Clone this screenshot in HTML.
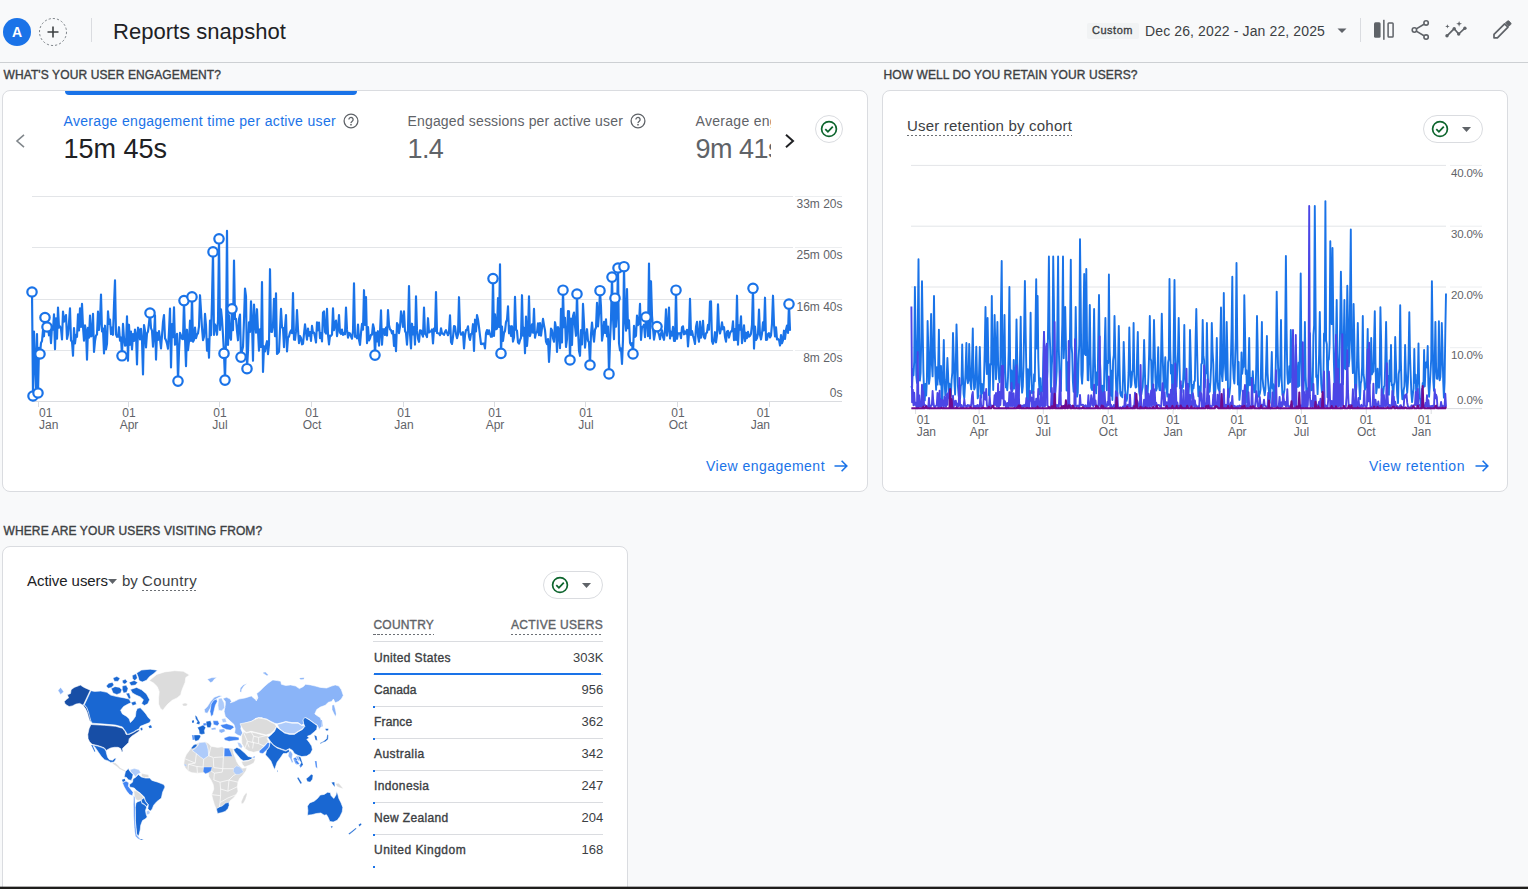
<!DOCTYPE html>
<html lang="en">
<head>
<meta charset="utf-8">
<title>Reports snapshot</title>
<style>
*{box-sizing:border-box;}
html,body{margin:0;padding:0;}
body{width:1528px;height:889px;overflow:hidden;position:relative;background:#f8f9fa;font-family:"Liberation Sans",sans-serif;color:#202124;}
.abs{position:absolute;}
.t{position:absolute;white-space:nowrap;line-height:1;}
#hdr{position:absolute;left:0;top:0;width:1528px;height:63px;background:#f8f9fa;border-bottom:1px solid #cdd0d3;}
.avatar{position:absolute;left:3px;top:18px;width:28px;height:28px;border-radius:50%;background:#1a73e8;color:#fff;font-weight:bold;font-size:14px;line-height:28px;text-align:center;}
.seclabel{position:absolute;font-size:12px;font-weight:bold;letter-spacing:.72px;color:#3c4043;white-space:nowrap;line-height:1;transform-origin:0 0;}
.card{position:absolute;background:#fff;border:1px solid #dadce0;border-radius:8px;}
.axl{position:absolute;font-size:12px;color:#5f6368;white-space:nowrap;line-height:1;}
.link{position:absolute;font-size:14.5px;color:#1a73e8;white-space:nowrap;line-height:1;}
.pill{position:absolute;border:1px solid #dadce0;border-radius:14px;background:#fff;}
.row{position:absolute;left:373px;width:229px;height:32px;border-bottom:1px solid #dadce0;}
.row .c{position:absolute;left:0;top:9px;font-size:12px;font-weight:bold;color:#3c4043;line-height:1;white-space:nowrap;}
.row .v{position:absolute;right:0;top:9px;font-size:12.5px;color:#3c4043;line-height:1;white-space:nowrap;}
.row .b{position:absolute;left:0;bottom:-2px;height:2px;background:#1a73e8;}
</style>
</head>
<body>

<div id="hdr">
<div class="avatar">A</div>
<svg class="abs" style="left:38px;top:17px" width="30" height="30" viewBox="0 0 30 30"><circle cx="15" cy="15" r="13.5" fill="none" stroke="#80868b" stroke-width="1" stroke-dasharray="2.2 2"/><path d="M15 9.5v11M9.5 15h11" stroke="#3c4043" stroke-width="1.6" fill="none"/></svg>
<div class="abs" style="left:91px;top:18px;width:1px;height:24px;background:#dadce0"></div>
<div class="t" style="top:21.08px;font-size:22px;color:#202124;left:113.00px;letter-spacing:0.023px;">Reports snapshot</div>
<div class="abs" style="left:1087px;top:23px;width:52px;height:16px;background:#f1f3f4;border-radius:2px"></div>
<div class="t" style="top:25.29px;font-size:11px;color:#3c4043;left:1092.00px;-webkit-text-stroke:0.33px #3c4043;letter-spacing:0.517px;">Custom</div>
<div class="t" style="top:23.75px;font-size:14px;color:#3c4043;left:1145.00px;letter-spacing:0.123px;">Dec 26, 2022 - Jan 22, 2025</div>
<svg class="abs" style="left:1337px;top:28px" width="10" height="6" viewBox="0 0 10 6"><path d="M0.5 0.5h9L5 5z" fill="#5f6368"/></svg>
<div class="abs" style="left:1360px;top:18px;width:1px;height:24px;background:#dadce0"></div>
<svg class="abs" style="left:1370px;top:16px" width="28" height="28" viewBox="0 0 28 28"><rect x="4" y="6.3" width="6.6" height="15.4" rx="1.5" fill="#5f6368"/><rect x="13.1" y="3.8" width="1.5" height="20" fill="#5f6368"/><rect x="18.1" y="7" width="5" height="14" rx="0.8" fill="none" stroke="#5f6368" stroke-width="1.5"/></svg>
<svg class="abs" style="left:1406px;top:16px" width="28" height="28" viewBox="0 0 28 28"><g fill="none" stroke="#5f6368" stroke-width="1.6"><path d="M10.3 12.9l7.7-4.7M10.3 15.1l7.7 4.7"/><circle cx="20.1" cy="6.9" r="2.2"/><circle cx="8.4" cy="14" r="2.2"/><circle cx="20.1" cy="21.1" r="2.2"/></g></svg>
<svg class="abs" style="left:1442px;top:16px" width="28" height="28" viewBox="0 0 28 28"><path d="M5 19.8l7.2-7.1 4.5 5.3 6.2-5.8" fill="none" stroke="#5f6368" stroke-width="1.7" stroke-linejoin="round"/><g fill="#5f6368"><circle cx="5" cy="19.8" r="1.7"/><circle cx="12.2" cy="12.7" r="1.7"/><circle cx="16.7" cy="18" r="1.7"/><circle cx="22.9" cy="12.2" r="1.7"/><path d="M5.4 8.2l.55 1.65 1.65.55-1.65.55-.55 1.65-.55-1.65-1.65-.55 1.65-.55zM17.1 4.9l.75 2.15 2.15.75-2.15.75-.75 2.15-.75-2.15-2.15-.75 2.15-.75z"/></g></svg>
<svg class="abs" style="left:1488px;top:16px" width="28" height="28" viewBox="0 0 28 28"><path d="M6 21.8v-3.4L16.6 7.8l3.4 3.4L9.4 21.8z" fill="none" stroke="#5f6368" stroke-width="1.7" stroke-linejoin="round"/><path d="M17.4 7l1.9-1.9a1.3 1.3 0 0 1 1.8 0l1.6 1.6a1.3 1.3 0 0 1 0 1.8L20.8 10.4z" fill="#5f6368" stroke="#5f6368" stroke-width="0.8" stroke-linejoin="round"/></svg>
</div>
<div class="t" style="top:68.84px;font-size:12px;color:#3c4043;left:3.50px;-webkit-text-stroke:0.36px #3c4043;letter-spacing:0.109px;">WHAT&#x27;S YOUR USER ENGAGEMENT?</div>
<div class="t" style="top:68.84px;font-size:12px;color:#3c4043;left:883.50px;-webkit-text-stroke:0.36px #3c4043;letter-spacing:0.090px;">HOW WELL DO YOU RETAIN YOUR USERS?</div>
<div class="t" style="top:524.84px;font-size:12px;color:#3c4043;left:3.50px;-webkit-text-stroke:0.36px #3c4043;letter-spacing:0.123px;">WHERE ARE YOUR USERS VISITING FROM?</div>
<div class="card" style="left:2px;top:90px;width:866px;height:402px"></div>
<div class="abs" style="left:65px;top:91px;width:292px;height:4px;background:#1a73e8;border-radius:0 0 4px 4px"></div>
<svg class="abs" style="left:12px;top:131px" width="18" height="20" viewBox="0 0 18 20"><path d="M12 3.8L5 10l7 6.2" fill="none" stroke="#80868b" stroke-width="1.6"/></svg>
<div class="t" style="top:114.35px;font-size:14px;color:#1a73e8;left:63.50px;letter-spacing:0.329px;">Average engagement time per active user</div>
<div class="t" style="top:135.84px;font-size:27px;color:#202124;left:63.50px;letter-spacing:-0.008px;">15m 45s</div>
<div class="t" style="top:114.35px;font-size:14px;color:#5f6368;left:407.50px;letter-spacing:0.168px;">Engaged sessions per active user</div>
<div class="t" style="top:135.84px;font-size:27px;color:#5f6368;left:407.50px;letter-spacing:-0.600px;">1.4</div>
<div class="abs" style="left:695px;top:105px;width:76px;height:62px;overflow:hidden"><div class="t" style="top:9.35px;font-size:14px;color:#5f6368;left:0.50px;letter-spacing:.3px;">Average engagement time per session</div><div class="t" style="top:30.84px;font-size:27px;color:#5f6368;left:0.50px;letter-spacing:-.5px;">9m 41s</div></div>
<svg class="abs" style="left:341.5px;top:111.5px" width="18" height="18" viewBox="0 0 18 18"><circle cx="9" cy="9" r="6.9" fill="none" stroke="#5f6368" stroke-width="1.3"/><path d="M6.9 7.5a2.1 2.1 0 1 1 3.3 1.7c-.8.6-1.2 1-1.2 1.9" fill="none" stroke="#5f6368" stroke-width="1.3"/><circle cx="9" cy="12.7" r=".85" fill="#5f6368"/></svg>
<svg class="abs" style="left:628.5px;top:111.5px" width="18" height="18" viewBox="0 0 18 18"><circle cx="9" cy="9" r="6.9" fill="none" stroke="#5f6368" stroke-width="1.3"/><path d="M6.9 7.5a2.1 2.1 0 1 1 3.3 1.7c-.8.6-1.2 1-1.2 1.9" fill="none" stroke="#5f6368" stroke-width="1.3"/><circle cx="9" cy="12.7" r=".85" fill="#5f6368"/></svg>
<svg class="abs" style="left:780px;top:131px" width="18" height="20" viewBox="0 0 18 20"><path d="M6 3.8L13 10l-7 6.2" fill="none" stroke="#202124" stroke-width="2"/></svg>
<div class="abs" style="left:815px;top:115px;width:28px;height:28px;border:1px solid #dadce0;border-radius:50%;background:#fff"></div>
<svg class="abs" style="left:819px;top:119px" width="20" height="20" viewBox="0 0 20 20"><circle cx="10" cy="10" r="7.4" fill="none" stroke="#0d652d" stroke-width="1.7"/><path d="M6.3 10.2l2.6 2.6 4.9-5.2" fill="none" stroke="#0d652d" stroke-width="1.8"/></svg>
<svg class="abs" style="left:0;top:180px" width="870" height="260" viewBox="0 180 870 260">
<path d="M32 196.5H793" stroke="#e3e5e8" stroke-width="1" fill="none"/>
<path d="M795 196.5H842" stroke="#eceef0" stroke-width="1" fill="none"/>
<path d="M32 247.5H793" stroke="#e3e5e8" stroke-width="1" fill="none"/>
<path d="M795 247.5H842" stroke="#eceef0" stroke-width="1" fill="none"/>
<path d="M32 299.5H793" stroke="#e3e5e8" stroke-width="1" fill="none"/>
<path d="M795 299.5H842" stroke="#eceef0" stroke-width="1" fill="none"/>
<path d="M32 350.5H793" stroke="#e3e5e8" stroke-width="1" fill="none"/>
<path d="M795 350.5H842" stroke="#eceef0" stroke-width="1" fill="none"/>
<path d="M32 401.5H842" stroke="#dadce0" stroke-width="1" fill="none"/>
<path d="M38.5 402v5" stroke="#dadce0" stroke-width="1"/>
<path d="M128.5 402v5" stroke="#dadce0" stroke-width="1"/>
<path d="M219.5 402v5" stroke="#dadce0" stroke-width="1"/>
<path d="M311.5 402v5" stroke="#dadce0" stroke-width="1"/>
<path d="M403.5 402v5" stroke="#dadce0" stroke-width="1"/>
<path d="M494.5 402v5" stroke="#dadce0" stroke-width="1"/>
<path d="M585.5 402v5" stroke="#dadce0" stroke-width="1"/>
<path d="M677.5 402v5" stroke="#dadce0" stroke-width="1"/>
<path d="M769.5 402v5" stroke="#dadce0" stroke-width="1"/>
<polyline points="32,292.0 33,396.0 34,331.6 35,361.0 36,388.0 37,334.1 38,393.0 39,347.8 40,354.0 41,342.9 42,341.0 43,330.0 44,336.3 45,317.5 46,331.0 47,327.0 48,328.3 49,335.3 50,329.7 51,343.2 52,326.5 53,329.7 54,314.3 55,349.3 56,318.3 57,338.7 58,307.6 59,327.6 60,326.4 61,328.6 62,339.4 63,311.5 64,321.6 65,317.9 66,315.0 67,338.9 68,334.6 69,322.4 70,308.4 71,340.7 72,341.3 73,355.8 74,328.1 75,343.4 76,334.9 77,336.9 78,314.3 79,330.5 80,308.3 81,327.0 82,303.9 83,326.9 84,340.6 85,325.4 86,330.7 87,359.6 88,327.9 89,337.7 90,315.6 91,336.4 92,335.7 93,313.8 94,352.0 95,341.1 96,335.4 97,334.4 98,311.5 99,329.9 100,321.1 101,294.5 102,331.5 103,328.6 104,353.4 105,325.7 106,349.4 107,343.8 108,311.3 109,324.0 110,319.6 111,334.1 112,327.7 113,334.8 114,305.0 115,280.3 116,334.3 117,336.8 118,336.7 119,327.2 120,340.6 121,337.5 122,355.8 123,323.8 124,338.1 125,345.6 126,345.3 127,316.3 128,360.8 129,324.7 130,344.8 131,331.5 132,349.4 133,334.0 134,340.9 135,329.5 136,334.5 137,364.5 138,327.6 139,329.8 140,339.4 141,328.9 142,340.0 143,374.4 144,325.0 145,331.0 146,347.5 147,333.4 148,331.4 149,322.8 150,313.0 151,328.2 152,330.7 153,346.7 154,334.1 155,315.2 156,359.6 157,332.7 158,340.0 159,331.1 160,338.9 161,348.5 162,335.7 163,321.9 164,315.0 165,338.3 166,340.3 167,343.6 168,348.7 169,331.1 170,308.5 171,367.5 172,324.1 173,337.1 174,307.4 175,344.8 176,340.2 177,333.8 178,381.1 179,350.9 180,332.8 181,335.3 182,338.8 183,339.2 184,300.6 185,337.6 186,366.2 187,329.7 188,350.2 189,341.4 190,320.7 191,341.0 192,296.9 193,341.7 194,339.8 195,327.5 196,338.2 197,334.7 198,333.4 199,326.3 200,295.2 201,310.6 202,328.0 203,340.1 204,336.6 205,313.8 206,325.5 207,350.6 208,339.3 209,357.8 210,320.5 211,335.2 212,300.2 213,251.9 214,335.0 215,324.4 216,326.2 217,334.8 218,320.0 219,238.8 220,330.0 221,309.4 222,319.0 223,335.3 224,353.4 225,380.1 226,340.0 227,230.8 228,345.0 229,315.4 230,337.0 231,339.8 232,308.8 233,330.2 234,260.5 235,319.0 236,318.9 237,330.9 238,340.3 239,318.9 240,314.6 241,357.1 242,351.0 243,347.0 244,320.3 245,288.6 246,296.4 247,368.7 248,350.9 249,322.3 250,331.9 251,301.4 252,322.9 253,360.8 254,304.5 255,321.5 256,332.6 257,309.2 258,330.9 259,350.8 260,329.3 261,347.0 262,282.1 263,372.0 264,346.2 265,351.5 266,345.2 267,341.2 268,354.1 269,344.4 270,269.2 271,331.6 272,331.9 273,324.7 274,298.9 275,336.1 276,293.4 277,354.0 278,353.0 279,351.8 280,330.1 281,308.8 282,327.3 283,328.0 284,347.2 285,327.1 286,315.0 287,351.4 288,337.5 289,336.6 290,332.5 291,330.4 292,333.2 293,293.0 294,339.6 295,339.8 296,331.4 297,310.1 298,329.6 299,343.2 300,336.0 301,337.9 302,344.4 303,343.9 304,333.8 305,324.4 306,332.7 307,339.6 308,328.5 309,335.7 310,332.0 311,341.0 312,325.8 313,332.8 314,332.5 315,336.8 316,342.5 317,322.4 318,330.3 319,322.5 320,338.1 321,333.0 322,341.4 323,312.7 324,311.3 325,331.9 326,333.5 327,308.8 328,334.3 329,344.4 330,335.7 331,335.8 332,334.5 333,308.3 334,330.2 335,323.7 336,320.5 337,336.2 338,329.3 339,315.0 340,332.6 341,334.0 342,329.6 343,334.9 344,333.2 345,334.3 346,307.6 347,329.9 348,337.7 349,332.9 350,333.4 351,336.6 352,338.7 353,331.2 354,283.3 355,336.8 356,336.2 357,338.3 358,324.5 359,339.8 360,344.8 361,332.8 362,323.9 363,329.7 364,290.2 365,324.9 366,297.0 367,343.2 368,327.1 369,340.4 370,338.5 371,334.8 372,334.7 373,324.3 374,328.5 375,355.1 376,332.6 377,341.5 378,331.2 379,345.7 380,332.1 381,310.4 382,344.8 383,329.4 384,329.2 385,335.0 386,327.6 387,335.5 388,310.0 389,325.1 390,329.4 391,330.2 392,333.4 393,331.0 394,346.0 395,334.9 396,351.2 397,323.0 398,325.0 399,333.1 400,326.8 401,311.3 402,317.9 403,326.8 404,311.3 405,331.0 406,333.1 407,344.7 408,329.0 409,286.0 410,334.1 411,348.5 412,323.7 413,334.5 414,327.1 415,344.6 416,296.4 417,330.9 418,338.7 419,341.8 420,330.4 421,330.6 422,334.1 423,336.7 424,307.6 425,333.7 426,334.7 427,337.1 428,318.2 429,332.5 430,331.6 431,331.3 432,329.5 433,343.4 434,328.6 435,331.1 436,292.0 437,332.9 438,333.2 439,333.5 440,335.2 441,328.3 442,333.5 443,333.8 444,334.9 445,331.8 446,330.1 447,332.9 448,335.2 449,331.9 450,315.4 451,342.0 452,344.0 453,336.8 454,326.1 455,326.5 456,333.9 457,338.1 458,334.5 459,297.2 460,331.1 461,334.7 462,334.2 463,332.1 464,348.4 465,335.3 466,330.0 467,329.9 468,326.3 469,336.4 470,340.0 471,334.0 472,333.8 473,324.2 474,350.9 475,319.7 476,331.5 477,315.0 478,319.5 479,327.0 480,335.6 481,344.0 482,344.1 483,343.5 484,343.5 485,348.4 486,333.1 487,330.0 488,334.1 489,330.4 490,334.0 491,336.8 492,336.7 493,278.6 494,335.9 495,314.3 496,329.3 497,328.7 498,298.2 499,327.0 500,264.3 501,353.4 502,326.5 503,340.9 504,332.9 505,331.1 506,321.9 507,319.8 508,306.3 509,333.3 510,326.4 511,336.0 512,326.2 513,341.6 514,337.4 515,296.9 516,329.6 517,330.8 518,342.3 519,343.6 520,340.1 521,337.8 522,295.2 523,335.7 524,327.9 525,353.3 526,316.6 527,346.0 528,333.2 529,296.4 530,336.1 531,331.8 532,324.4 533,332.6 534,308.9 535,337.7 536,332.9 537,332.3 538,323.4 539,335.1 540,323.1 541,335.7 542,327.9 543,318.8 544,325.1 545,330.2 546,341.7 547,344.1 548,339.0 549,362.0 550,345.1 551,328.6 552,330.3 553,338.1 554,341.8 555,322.2 556,328.0 557,352.0 558,327.0 559,330.1 560,348.1 561,308.8 562,342.5 563,290.2 564,327.3 565,317.9 566,347.0 567,339.1 568,311.0 569,311.2 570,360.0 571,318.6 572,345.0 573,316.0 574,312.6 575,326.1 576,335.8 577,294.0 578,329.3 579,350.7 580,355.8 581,330.0 582,344.5 583,303.9 584,322.8 585,347.6 586,336.2 587,329.2 588,340.7 589,342.5 590,365.0 591,333.8 592,322.5 593,333.4 594,341.7 595,329.8 596,327.5 597,302.8 598,326.5 599,314.0 600,290.7 601,307.0 602,340.6 603,334.2 604,321.9 605,332.9 606,319.4 607,336.4 608,326.6 609,373.9 610,342.3 611,319.0 612,277.1 613,317.7 614,339.3 615,298.2 616,326.6 617,312.0 618,268.0 619,343.1 620,350.3 621,348.4 622,363.9 623,339.7 624,266.7 625,319.4 626,330.7 627,289.0 628,328.3 629,320.4 630,342.8 631,345.1 632,343.1 633,353.9 634,325.8 635,336.9 636,335.7 637,315.5 638,325.1 639,323.3 640,303.9 641,339.9 642,327.1 643,326.7 644,324.6 645,337.2 646,317.0 647,316.7 648,336.1 649,263.5 650,338.4 651,281.2 652,315.5 653,328.4 654,339.6 655,333.5 656,328.4 657,326.6 658,331.7 659,334.6 660,339.2 661,333.5 662,330.2 663,336.8 664,339.8 665,330.3 666,309.4 667,335.6 668,328.5 669,307.6 670,338.5 671,331.7 672,335.7 673,326.8 674,341.0 675,341.0 676,290.2 677,338.8 678,333.2 679,333.4 680,333.2 681,338.1 682,327.3 683,326.3 684,334.3 685,331.4 686,333.7 687,329.8 688,346.5 689,333.1 690,298.9 691,335.0 692,331.0 693,335.8 694,339.2 695,344.0 696,326.8 697,321.9 698,336.0 699,341.7 700,321.5 701,337.7 702,333.3 703,320.8 704,337.3 705,338.5 706,333.4 707,332.5 708,324.8 709,329.6 710,301.5 711,301.4 712,341.1 713,343.8 714,340.1 715,332.2 716,342.3 717,335.0 718,304.4 719,328.6 720,333.5 721,328.9 722,322.4 723,329.3 724,327.2 725,337.0 726,341.6 727,331.6 728,330.9 729,337.6 730,333.4 731,331.3 732,331.2 733,321.4 734,340.2 735,329.1 736,340.0 737,295.7 738,344.7 739,325.4 740,329.7 741,316.3 742,343.1 743,335.4 744,325.4 745,341.2 746,332.7 747,338.1 748,331.8 749,336.6 750,335.9 751,333.7 752,324.5 753,288.3 754,348.6 755,326.6 756,339.9 757,338.2 758,333.6 759,309.6 760,335.0 761,339.4 762,333.5 763,322.4 764,330.3 765,297.7 766,339.9 767,339.7 768,334.0 769,333.1 770,337.5 771,335.5 772,323.6 773,295.7 774,324.6 775,336.4 776,327.4 777,339.5 778,338.9 779,339.9 780,345.5 781,335.0 782,343.3 783,340.1 784,330.7 785,338.9 786,329.8 787,325.5 788,332.9 789,304.1 790,330.0" fill="none" stroke="#1a73e8" stroke-width="2.15" stroke-linejoin="round" stroke-linecap="round"/>
<circle cx="32.0" cy="292.0" r="4.7" fill="#fff" stroke="#1a73e8" stroke-width="2.2"/>
<circle cx="33.0" cy="396.0" r="4.7" fill="#fff" stroke="#1a73e8" stroke-width="2.2"/>
<circle cx="38.0" cy="393.0" r="4.7" fill="#fff" stroke="#1a73e8" stroke-width="2.2"/>
<circle cx="40.0" cy="354.0" r="4.7" fill="#fff" stroke="#1a73e8" stroke-width="2.2"/>
<circle cx="45.0" cy="317.5" r="4.7" fill="#fff" stroke="#1a73e8" stroke-width="2.2"/>
<circle cx="47.0" cy="327.0" r="4.7" fill="#fff" stroke="#1a73e8" stroke-width="2.2"/>
<circle cx="122.0" cy="355.8" r="4.7" fill="#fff" stroke="#1a73e8" stroke-width="2.2"/>
<circle cx="150.0" cy="313.0" r="4.7" fill="#fff" stroke="#1a73e8" stroke-width="2.2"/>
<circle cx="178.0" cy="381.1" r="4.7" fill="#fff" stroke="#1a73e8" stroke-width="2.2"/>
<circle cx="184.0" cy="300.6" r="4.7" fill="#fff" stroke="#1a73e8" stroke-width="2.2"/>
<circle cx="192.0" cy="296.9" r="4.7" fill="#fff" stroke="#1a73e8" stroke-width="2.2"/>
<circle cx="213.0" cy="251.9" r="4.7" fill="#fff" stroke="#1a73e8" stroke-width="2.2"/>
<circle cx="219.0" cy="238.8" r="4.7" fill="#fff" stroke="#1a73e8" stroke-width="2.2"/>
<circle cx="224.0" cy="353.4" r="4.7" fill="#fff" stroke="#1a73e8" stroke-width="2.2"/>
<circle cx="225.0" cy="380.1" r="4.7" fill="#fff" stroke="#1a73e8" stroke-width="2.2"/>
<circle cx="232.0" cy="308.8" r="4.7" fill="#fff" stroke="#1a73e8" stroke-width="2.2"/>
<circle cx="241.0" cy="357.1" r="4.7" fill="#fff" stroke="#1a73e8" stroke-width="2.2"/>
<circle cx="247.0" cy="368.7" r="4.7" fill="#fff" stroke="#1a73e8" stroke-width="2.2"/>
<circle cx="375.0" cy="355.1" r="4.7" fill="#fff" stroke="#1a73e8" stroke-width="2.2"/>
<circle cx="493.0" cy="278.6" r="4.7" fill="#fff" stroke="#1a73e8" stroke-width="2.2"/>
<circle cx="501.0" cy="353.4" r="4.7" fill="#fff" stroke="#1a73e8" stroke-width="2.2"/>
<circle cx="563.0" cy="290.2" r="4.7" fill="#fff" stroke="#1a73e8" stroke-width="2.2"/>
<circle cx="570.0" cy="360.0" r="4.7" fill="#fff" stroke="#1a73e8" stroke-width="2.2"/>
<circle cx="577.0" cy="294.0" r="4.7" fill="#fff" stroke="#1a73e8" stroke-width="2.2"/>
<circle cx="590.0" cy="365.0" r="4.7" fill="#fff" stroke="#1a73e8" stroke-width="2.2"/>
<circle cx="600.0" cy="290.7" r="4.7" fill="#fff" stroke="#1a73e8" stroke-width="2.2"/>
<circle cx="609.0" cy="373.9" r="4.7" fill="#fff" stroke="#1a73e8" stroke-width="2.2"/>
<circle cx="612.0" cy="277.1" r="4.7" fill="#fff" stroke="#1a73e8" stroke-width="2.2"/>
<circle cx="615.0" cy="298.2" r="4.7" fill="#fff" stroke="#1a73e8" stroke-width="2.2"/>
<circle cx="618.0" cy="268.0" r="4.7" fill="#fff" stroke="#1a73e8" stroke-width="2.2"/>
<circle cx="624.0" cy="266.7" r="4.7" fill="#fff" stroke="#1a73e8" stroke-width="2.2"/>
<circle cx="633.0" cy="353.9" r="4.7" fill="#fff" stroke="#1a73e8" stroke-width="2.2"/>
<circle cx="646.0" cy="317.0" r="4.7" fill="#fff" stroke="#1a73e8" stroke-width="2.2"/>
<circle cx="657.0" cy="326.6" r="4.7" fill="#fff" stroke="#1a73e8" stroke-width="2.2"/>
<circle cx="676.0" cy="290.2" r="4.7" fill="#fff" stroke="#1a73e8" stroke-width="2.2"/>
<circle cx="753.0" cy="288.3" r="4.7" fill="#fff" stroke="#1a73e8" stroke-width="2.2"/>
<circle cx="789.0" cy="304.1" r="4.7" fill="#fff" stroke="#1a73e8" stroke-width="2.2"/>
</svg>
<div class="t" style="top:197.64px;font-size:12px;color:#5f6368;right:685.50px;">33m 20s</div>
<div class="t" style="top:248.84px;font-size:12px;color:#5f6368;right:685.50px;">25m 00s</div>
<div class="t" style="top:301.34px;font-size:12px;color:#5f6368;right:685.50px;">16m 40s</div>
<div class="t" style="top:351.84px;font-size:12px;color:#5f6368;right:685.50px;">8m 20s</div>
<div class="t" style="top:386.84px;font-size:12px;color:#5f6368;right:685.50px;">0s</div>
<div class="t" style="top:406.84px;font-size:12px;color:#5f6368;left:39.00px;">01</div>
<div class="t" style="top:418.64px;font-size:12px;color:#5f6368;left:39.00px;">Jan</div>
<div class="t" style="top:406.84px;font-size:12px;color:#5f6368;left:122.33px;">01</div>
<div class="t" style="top:418.64px;font-size:12px;color:#5f6368;left:119.66px;">Apr</div>
<div class="t" style="top:406.84px;font-size:12px;color:#5f6368;left:213.33px;">01</div>
<div class="t" style="top:418.64px;font-size:12px;color:#5f6368;left:212.33px;">Jul</div>
<div class="t" style="top:406.84px;font-size:12px;color:#5f6368;left:305.33px;">01</div>
<div class="t" style="top:418.64px;font-size:12px;color:#5f6368;left:302.67px;">Oct</div>
<div class="t" style="top:406.84px;font-size:12px;color:#5f6368;left:397.33px;">01</div>
<div class="t" style="top:418.64px;font-size:12px;color:#5f6368;left:394.33px;">Jan</div>
<div class="t" style="top:406.84px;font-size:12px;color:#5f6368;left:488.33px;">01</div>
<div class="t" style="top:418.64px;font-size:12px;color:#5f6368;left:485.66px;">Apr</div>
<div class="t" style="top:406.84px;font-size:12px;color:#5f6368;left:579.33px;">01</div>
<div class="t" style="top:418.64px;font-size:12px;color:#5f6368;left:578.33px;">Jul</div>
<div class="t" style="top:406.84px;font-size:12px;color:#5f6368;left:671.33px;">01</div>
<div class="t" style="top:418.64px;font-size:12px;color:#5f6368;left:668.67px;">Oct</div>
<div class="t" style="top:406.84px;font-size:12px;color:#5f6368;left:756.65px;">01</div>
<div class="t" style="top:418.64px;font-size:12px;color:#5f6368;left:750.65px;">Jan</div>
<div class="t" style="top:459.15px;font-size:14px;color:#1a73e8;left:0.00px;letter-spacing:0.479px;left:706px;">View engagement</div>
<svg class="abs" style="left:833px;top:459px" width="16" height="14" viewBox="0 0 16 14"><path d="M1.5 7h12M8.6 1.8L13.8 7l-5.2 5.2" fill="none" stroke="#1a73e8" stroke-width="1.6"/></svg>
<div class="card" style="left:882px;top:90px;width:626px;height:402px"></div>
<div class="t" style="top:117.80px;font-size:15px;color:#3c4043;left:907.00px;letter-spacing:0.205px;">User retention by cohort</div>
<div class="abs" style="left:907px;top:135px;width:165px;height:1px;background:repeating-linear-gradient(90deg,#6b6f74 0 2.5px,transparent 2.5px 4px)"></div>
<div class="pill" style="left:1423px;top:115px;width:60px;height:28px"></div>
<svg class="abs" style="left:1430px;top:119px" width="20" height="20" viewBox="0 0 20 20"><circle cx="10" cy="10" r="7.4" fill="none" stroke="#0d652d" stroke-width="1.7"/><path d="M6.3 10.2l2.6 2.6 4.9-5.2" fill="none" stroke="#0d652d" stroke-width="1.8"/></svg>
<svg class="abs" style="left:1462px;top:126.5px" width="9" height="5" viewBox="0 0 9 5"><path d="M0 0h9L4.5 5z" fill="#5f6368"/></svg>
<svg class="abs" style="left:890px;top:150px" width="620" height="270" viewBox="890 150 620 270">
<path d="M911 165.4H1446" stroke="#e3e5e8" stroke-width="1" fill="none"/>
<path d="M1450 165.4H1482" stroke="#eceef0" stroke-width="1" fill="none"/>
<path d="M911 226.2H1446" stroke="#e3e5e8" stroke-width="1" fill="none"/>
<path d="M1450 226.2H1482" stroke="#eceef0" stroke-width="1" fill="none"/>
<path d="M911 287.0H1446" stroke="#e3e5e8" stroke-width="1" fill="none"/>
<path d="M1450 287.0H1482" stroke="#eceef0" stroke-width="1" fill="none"/>
<path d="M911 347.7H1446" stroke="#e3e5e8" stroke-width="1" fill="none"/>
<path d="M1450 347.7H1482" stroke="#eceef0" stroke-width="1" fill="none"/>
<path d="M911 408.6H1482" stroke="#dadce0" stroke-width="1" fill="none"/>
<path d="M915.6 409v5" stroke="#dadce0" stroke-width="1"/>
<path d="M979.1 409v5" stroke="#dadce0" stroke-width="1"/>
<path d="M1043.3 409v5" stroke="#dadce0" stroke-width="1"/>
<path d="M1108.2 409v5" stroke="#dadce0" stroke-width="1"/>
<path d="M1173.1 409v5" stroke="#dadce0" stroke-width="1"/>
<path d="M1237.2 409v5" stroke="#dadce0" stroke-width="1"/>
<path d="M1301.4 409v5" stroke="#dadce0" stroke-width="1"/>
<path d="M1366.3 409v5" stroke="#dadce0" stroke-width="1"/>
<path d="M1431.2 409v5" stroke="#dadce0" stroke-width="1"/>
<polyline points="911.4,385.9 912.1,388.4 912.8,369.0 913.5,375.3 914.2,361.7 914.9,287.0 915.6,334.5 916.3,375.6 917.0,382.8 917.7,335.8 918.5,259.3 919.2,348.1 919.9,380.6 920.6,372.8 921.3,336.3 922.0,281.3 922.7,329.0 923.4,371.6 924.1,393.7 924.8,400.4 925.5,384.0 926.2,395.5 926.9,379.9 927.6,321.0 928.3,347.5 929.0,383.9 929.7,378.0 930.4,348.1 931.1,314.0 931.9,364.5 932.6,376.4 933.3,345.4 934.0,296.0 934.7,349.0 935.4,373.8 936.1,389.8 936.8,367.3 937.5,384.6 938.2,366.8 938.9,329.6 939.6,377.7 940.3,384.6 941.0,366.0 941.7,400.1 942.4,399.3 943.1,369.8 943.8,340.0 944.5,379.4 945.3,395.5 946.0,391.9 946.7,376.8 947.4,358.0 948.1,374.2 948.8,397.9 949.5,383.7 950.2,398.9 950.9,395.3 951.6,380.0 952.3,372.6 953.0,333.0 953.7,356.2 954.4,382.0 955.1,394.6 955.8,364.7 956.5,324.5 957.2,350.0 957.9,385.9 958.7,396.1 959.4,389.5 960.1,398.4 960.8,386.3 961.5,383.6 962.2,344.4 962.9,375.6 963.6,394.2 964.3,398.3 965.0,384.9 965.7,366.9 966.4,343.0 967.1,377.9 967.8,383.2 968.5,380.8 969.2,344.0 969.9,367.7 970.6,384.2 971.3,389.3 972.1,358.1 972.8,328.4 973.5,377.4 974.2,389.5 974.9,387.6 975.6,370.1 976.3,346.8 977.0,376.0 977.7,398.4 978.4,395.0 979.1,372.1 979.8,347.0 980.5,379.0 981.2,397.6 981.9,383.9 982.6,385.9 983.3,393.5 984.0,379.0 984.7,350.8 985.5,307.0 986.2,357.9 986.9,374.0 987.6,318.0 988.3,356.1 989.0,395.2 989.7,395.3 990.4,364.0 991.1,364.5 991.8,296.0 992.5,353.5 993.2,390.1 993.9,360.0 994.6,315.0 995.3,343.4 996.0,379.2 996.7,352.9 997.4,322.0 998.1,361.0 998.9,378.1 999.6,382.4 1000.3,371.0 1001.0,305.8 1001.7,261.0 1002.4,360.7 1003.1,385.2 1003.8,354.7 1004.5,315.0 1005.2,370.3 1005.9,387.4 1006.6,385.6 1007.3,390.3 1008.0,377.1 1008.7,350.4 1009.4,287.0 1010.1,358.7 1010.8,388.8 1011.5,370.5 1012.3,391.1 1013.0,387.6 1013.7,360.0 1014.4,388.5 1015.1,384.9 1015.8,367.8 1016.5,319.5 1017.2,356.8 1017.9,388.0 1018.6,396.0 1019.3,385.5 1020.0,359.5 1020.7,316.7 1021.4,375.4 1022.1,392.7 1022.8,386.7 1023.5,366.2 1024.2,325.7 1024.9,281.0 1025.7,335.3 1026.4,374.1 1027.1,401.7 1027.8,369.1 1028.5,399.9 1029.2,382.9 1029.9,365.9 1030.6,312.8 1031.3,369.7 1032.0,393.3 1032.7,388.8 1033.4,392.9 1034.1,374.3 1034.8,381.2 1035.5,326.1 1036.2,279.2 1036.9,348.5 1037.6,296.0 1038.3,359.0 1039.1,384.1 1039.8,394.4 1040.5,378.3 1041.2,399.8 1041.9,387.3 1042.6,391.3 1043.3,358.8 1044.0,332.0 1044.7,355.9 1045.4,394.5 1046.1,395.0 1046.8,383.6 1047.5,371.1 1048.2,317.1 1048.9,256.4 1049.6,332.0 1050.3,350.9 1051.0,391.9 1051.8,365.8 1052.5,353.4 1053.2,256.4 1053.9,302.4 1054.6,368.3 1055.3,392.2 1056.0,383.7 1056.7,371.0 1057.4,320.9 1058.1,256.4 1058.8,348.6 1059.5,373.0 1060.2,390.8 1060.9,391.0 1061.6,352.3 1062.3,324.0 1063.0,256.4 1063.7,358.3 1064.4,341.0 1065.2,307.0 1065.9,341.3 1066.6,390.5 1067.3,362.2 1068.0,388.7 1068.7,394.2 1069.4,370.7 1070.1,326.1 1070.8,259.8 1071.5,345.8 1072.2,353.3 1072.9,381.8 1073.6,391.8 1074.3,389.7 1075.0,357.9 1075.7,307.0 1076.4,350.0 1077.1,396.7 1077.8,392.3 1078.6,358.9 1079.3,344.5 1080.0,239.1 1080.7,298.2 1081.4,374.7 1082.1,383.6 1082.8,370.5 1083.5,317.1 1084.2,274.0 1084.9,353.9 1085.6,355.1 1086.3,269.0 1087.0,340.2 1087.7,380.2 1088.4,380.4 1089.1,349.0 1089.8,305.0 1090.5,357.1 1091.2,387.6 1092.0,390.0 1092.7,389.8 1093.4,351.7 1094.1,309.0 1094.8,357.1 1095.5,385.3 1096.2,393.3 1096.9,372.2 1097.6,384.9 1098.3,338.2 1099.0,295.0 1099.7,356.0 1100.4,370.0 1101.1,394.8 1101.8,389.8 1102.5,385.6 1103.2,393.2 1103.9,394.7 1104.6,350.7 1105.4,318.0 1106.1,365.0 1106.8,390.2 1107.5,360.8 1108.2,363.2 1108.9,274.5 1109.6,348.1 1110.3,365.8 1111.0,395.7 1111.7,370.8 1112.4,400.1 1113.1,360.4 1113.8,355.2 1114.5,316.0 1115.2,347.6 1115.9,379.1 1116.6,400.4 1117.3,394.8 1118.0,370.1 1118.8,326.0 1119.5,364.3 1120.2,392.8 1120.9,395.9 1121.6,392.3 1122.3,397.4 1123.0,379.3 1123.7,342.0 1124.4,365.9 1125.1,390.2 1125.8,397.4 1126.5,400.9 1127.2,398.1 1127.9,389.0 1128.6,372.4 1129.3,327.5 1130.0,359.2 1130.7,387.2 1131.4,384.9 1132.2,372.0 1132.9,370.4 1133.6,323.0 1134.3,374.3 1135.0,383.1 1135.7,387.6 1136.4,386.9 1137.1,355.4 1137.8,332.0 1138.5,372.5 1139.2,391.8 1139.9,395.7 1140.6,392.0 1141.3,394.6 1142.0,390.1 1142.7,387.0 1143.4,370.9 1144.1,340.0 1144.8,365.7 1145.6,399.4 1146.3,401.0 1147.0,405.8 1147.7,392.0 1148.4,377.2 1149.1,354.2 1149.8,316.0 1150.5,358.6 1151.2,360.6 1151.9,393.6 1152.6,384.4 1153.3,357.0 1154.0,320.0 1154.7,348.4 1155.4,377.5 1156.1,390.6 1156.8,388.7 1157.5,370.4 1158.2,347.2 1159.0,386.5 1159.7,390.2 1160.4,390.4 1161.1,353.2 1161.8,313.7 1162.5,350.9 1163.2,372.8 1163.9,390.9 1164.6,373.8 1165.3,357.1 1166.0,387.5 1166.7,390.9 1167.4,396.6 1168.1,362.4 1168.8,359.0 1169.5,279.0 1170.2,347.5 1170.9,373.5 1171.6,364.9 1172.4,396.8 1173.1,394.2 1173.8,332.2 1174.5,280.0 1175.2,345.1 1175.9,384.2 1176.6,386.6 1177.3,367.6 1178.0,352.8 1178.7,318.0 1179.4,358.5 1180.1,388.2 1180.8,385.3 1181.5,392.7 1182.2,385.8 1182.9,387.2 1183.6,368.7 1184.3,325.0 1185.0,378.3 1185.8,384.2 1186.5,401.3 1187.2,383.7 1187.9,383.9 1188.6,393.4 1189.3,382.2 1190.0,330.0 1190.7,357.1 1191.4,387.3 1192.1,398.2 1192.8,385.0 1193.5,388.3 1194.2,381.3 1194.9,380.9 1195.6,339.2 1196.3,309.0 1197.0,344.6 1197.7,376.5 1198.4,396.2 1199.2,386.5 1199.9,400.7 1200.6,397.4 1201.3,364.1 1202.0,363.4 1202.7,320.0 1203.4,356.2 1204.1,360.4 1204.8,387.4 1205.5,371.4 1206.2,373.4 1206.9,323.0 1207.6,361.7 1208.3,394.6 1209.0,384.2 1209.7,391.8 1210.4,381.9 1211.1,366.7 1211.8,323.0 1212.6,351.5 1213.3,364.2 1214.0,398.5 1214.7,400.9 1215.4,389.8 1216.1,369.6 1216.8,338.0 1217.5,380.2 1218.2,388.1 1218.9,390.1 1219.6,391.3 1220.3,343.4 1221.0,307.4 1221.7,373.3 1222.4,381.1 1223.1,366.6 1223.8,293.0 1224.5,349.6 1225.2,368.1 1226.0,380.1 1226.7,322.0 1227.4,353.0 1228.1,396.3 1228.8,397.5 1229.5,393.5 1230.2,385.8 1230.9,358.7 1231.6,328.6 1232.3,276.8 1233.0,364.6 1233.7,378.9 1234.4,383.5 1235.1,360.5 1235.8,338.6 1236.5,263.0 1237.2,335.3 1237.9,384.5 1238.6,362.0 1239.4,399.9 1240.1,392.4 1240.8,389.8 1241.5,352.5 1242.2,373.8 1242.9,367.2 1243.6,367.0 1244.3,295.3 1245.0,330.8 1245.7,374.1 1246.4,370.3 1247.1,402.7 1247.8,392.5 1248.5,367.9 1249.2,338.0 1249.9,385.2 1250.6,377.9 1251.3,377.9 1252.0,387.8 1252.8,371.2 1253.5,384.8 1254.2,392.4 1254.9,385.1 1255.6,392.0 1256.3,364.3 1257.0,316.0 1257.7,347.3 1258.4,396.7 1259.1,396.0 1259.8,393.8 1260.5,389.7 1261.2,358.6 1261.9,322.0 1262.6,378.3 1263.3,386.6 1264.0,390.4 1264.7,395.3 1265.4,388.9 1266.2,362.2 1266.9,336.0 1267.6,373.2 1268.3,384.1 1269.0,392.0 1269.7,402.9 1270.4,391.3 1271.1,376.1 1271.8,352.0 1272.5,388.5 1273.2,384.3 1273.9,406.1 1274.6,393.1 1275.3,383.9 1276.0,353.8 1276.7,291.6 1277.4,335.1 1278.1,368.1 1278.8,386.4 1279.6,378.6 1280.3,365.2 1281.0,320.0 1281.7,379.6 1282.4,394.6 1283.1,396.7 1283.8,393.6 1284.5,389.7 1285.2,331.0 1285.9,256.0 1286.6,330.9 1287.3,373.8 1288.0,383.8 1288.7,383.0 1289.4,366.1 1290.1,382.0 1290.8,330.0 1291.5,359.2 1292.2,381.1 1293.0,398.8 1293.7,401.3 1294.4,386.1 1295.1,368.2 1295.8,345.0 1296.5,364.4 1297.2,376.5 1297.9,387.0 1298.6,362.6 1299.3,385.9 1300.0,341.5 1300.7,273.4 1301.4,353.0 1302.1,386.2 1302.8,397.1 1303.5,387.6 1304.2,374.3 1304.9,322.0 1305.6,377.0 1306.4,391.9 1307.1,393.2 1307.8,388.2 1308.5,393.7 1309.2,360.7 1309.9,333.1 1310.6,367.0 1311.3,390.4 1312.0,385.5 1312.7,389.9 1313.4,335.2 1314.1,325.4 1314.8,206.0 1315.5,298.3 1316.2,377.1 1316.9,375.5 1317.6,394.1 1318.3,375.0 1319.1,354.6 1319.8,312.0 1320.5,355.8 1321.2,383.6 1321.9,392.0 1322.6,392.5 1323.3,384.8 1324.0,333.4 1324.7,340.5 1325.4,201.1 1326.1,340.8 1326.8,344.2 1327.5,397.2 1328.2,360.4 1328.9,359.3 1329.6,343.8 1330.3,241.3 1331.0,299.4 1331.7,324.1 1332.5,248.0 1333.2,317.4 1333.9,362.6 1334.6,385.1 1335.3,368.0 1336.0,340.5 1336.7,300.0 1337.4,353.5 1338.1,373.6 1338.8,389.7 1339.5,359.9 1340.2,323.0 1340.9,271.6 1341.6,312.8 1342.3,357.4 1343.0,384.3 1343.7,343.3 1344.4,300.0 1345.1,368.5 1345.9,369.3 1346.6,338.4 1347.3,285.8 1348.0,323.5 1348.7,366.3 1349.4,358.3 1350.1,293.9 1350.8,229.4 1351.5,340.1 1352.2,357.2 1352.9,373.1 1353.6,304.0 1354.3,337.5 1355.0,387.9 1355.7,394.7 1356.4,386.9 1357.1,357.2 1357.8,323.0 1358.5,357.9 1359.3,386.0 1360.0,399.2 1360.7,383.5 1361.4,380.8 1362.1,366.8 1362.8,316.0 1363.5,374.4 1364.2,378.8 1364.9,389.9 1365.6,386.8 1366.3,387.4 1367.0,361.2 1367.7,329.0 1368.4,380.5 1369.1,381.9 1369.8,383.4 1370.5,379.0 1371.2,338.0 1371.9,374.4 1372.7,372.3 1373.4,371.5 1374.1,340.4 1374.8,311.2 1375.5,363.6 1376.2,393.3 1376.9,388.2 1377.6,368.7 1378.3,384.5 1379.0,387.7 1379.7,373.0 1380.4,307.3 1381.1,338.7 1381.8,396.0 1382.5,392.9 1383.2,394.2 1383.9,386.8 1384.6,385.7 1385.3,360.8 1386.1,322.0 1386.8,362.4 1387.5,393.4 1388.2,376.1 1388.9,394.7 1389.6,360.5 1390.3,381.2 1391.0,345.0 1391.7,385.2 1392.4,384.5 1393.1,400.8 1393.8,385.6 1394.5,382.0 1395.2,337.0 1395.9,360.7 1396.6,381.7 1397.3,396.5 1398.0,403.1 1398.7,374.1 1399.5,368.9 1400.2,305.2 1400.9,361.6 1401.6,387.8 1402.3,399.3 1403.0,399.4 1403.7,390.2 1404.4,386.1 1405.1,345.0 1405.8,371.4 1406.5,382.9 1407.2,392.7 1407.9,382.3 1408.6,354.9 1409.3,312.2 1410.0,354.5 1410.7,375.5 1411.4,393.6 1412.1,402.1 1412.9,393.9 1413.6,388.7 1414.3,349.0 1415.0,382.7 1415.7,374.8 1416.4,401.9 1417.1,385.1 1417.8,379.4 1418.5,343.5 1419.2,386.0 1419.9,398.2 1420.6,402.1 1421.3,405.7 1422.0,398.8 1422.7,383.0 1423.4,387.4 1424.1,350.0 1424.8,386.2 1425.5,367.1 1426.3,362.1 1427.0,367.5 1427.7,346.0 1428.4,384.8 1429.1,396.7 1429.8,385.8 1430.5,372.8 1431.2,359.0 1431.9,281.1 1432.6,333.7 1433.3,380.6 1434.0,390.8 1434.7,363.4 1435.4,322.0 1436.1,367.1 1436.8,378.7 1437.5,378.9 1438.2,370.7 1438.9,321.3 1439.7,380.4 1440.4,376.8 1441.1,361.1 1441.8,323.0 1442.5,349.3 1443.2,381.3 1443.9,397.6 1444.6,382.2 1445.3,332.3 1446.0,293.6" fill="none" stroke="#1a73e8" stroke-width="1.9" stroke-linejoin="round"/>
<polyline points="911.4,306.4 912.1,402.2 912.8,389.6 913.5,405.2 914.2,392.8 914.9,404.7 915.6,402.7 916.3,406.2 917.0,408.3 917.7,352.0 918.5,407.1 919.2,395.2 919.9,406.4 920.6,405.3 921.3,406.7 922.0,384.8 922.7,407.7 923.4,391.3 924.1,405.2 924.8,405.1 925.5,405.1 926.2,408.0 926.9,406.3 927.6,406.8 928.3,407.3 929.0,397.9 929.7,408.2 930.4,408.0 931.1,405.5 931.9,404.9 932.6,391.0 933.3,401.6 934.0,406.2 934.7,407.4 935.4,406.2 936.1,405.8 936.8,404.8 937.5,392.9 938.2,407.2 938.9,406.3 939.6,390.6 940.3,407.2 941.0,399.5 941.7,406.0 942.4,400.0 943.1,405.2 943.8,407.6 944.5,396.7 945.3,401.1 946.0,406.9 946.7,394.3 947.4,404.8 948.1,393.1 948.8,394.7 949.5,390.3 950.2,407.5 950.9,406.6 951.6,406.1 952.3,407.2 953.0,395.7 953.7,407.0 954.4,401.3 955.1,404.9 955.8,400.7 956.5,405.5 957.2,407.0 957.9,403.4 958.7,406.0 959.4,378.0 960.1,404.9 960.8,407.0 961.5,405.1 962.2,407.6 962.9,407.4 963.6,406.8 964.3,399.3 965.0,405.5 965.7,405.4 966.4,407.2 967.1,406.6 967.8,404.9 968.5,405.8 969.2,406.3 969.9,405.2 970.6,407.0 971.3,404.7 972.1,394.9 972.8,392.0 973.5,407.1 974.2,406.8 974.9,406.0 975.6,408.2 976.3,405.7 977.0,406.8 977.7,404.9 978.4,408.0 979.1,406.9 979.8,405.3 980.5,395.5 981.2,406.4 981.9,408.1 982.6,405.6 983.3,405.4 984.0,392.2 984.7,395.0 985.5,399.7 986.2,388.9 986.9,404.8 987.6,407.5 988.3,408.1 989.0,406.1 989.7,396.2 990.4,406.4 991.1,405.8 991.8,405.5 992.5,406.1 993.2,406.0 993.9,404.7 994.6,395.2 995.3,404.9 996.0,393.0 996.7,406.3 997.4,406.6 998.1,383.7 998.9,407.6 999.6,392.0 1000.3,405.0 1001.0,393.2 1001.7,366.0 1002.4,398.5 1003.1,365.8 1003.8,405.4 1004.5,400.6 1005.2,402.0 1005.9,407.7 1006.6,408.2 1007.3,403.0 1008.0,407.8 1008.7,406.7 1009.4,392.3 1010.1,405.6 1010.8,406.1 1011.5,382.9 1012.3,406.0 1013.0,405.5 1013.7,393.3 1014.4,407.3 1015.1,406.6 1015.8,405.6 1016.5,365.4 1017.2,406.4 1017.9,406.2 1018.6,384.2 1019.3,408.0 1020.0,406.3 1020.7,405.2 1021.4,408.1 1022.1,405.7 1022.8,405.8 1023.5,407.3 1024.2,404.8 1024.9,405.7 1025.7,406.8 1026.4,398.0 1027.1,407.3 1027.8,407.0 1028.5,400.7 1029.2,407.8 1029.9,390.6 1030.6,400.9 1031.3,397.4 1032.0,406.7 1032.7,407.8 1033.4,391.6 1034.1,406.6 1034.8,401.9 1035.5,408.2 1036.2,398.8 1036.9,406.2 1037.6,403.1 1038.3,388.9 1039.1,407.0 1039.8,407.1 1040.5,404.9 1041.2,392.5 1041.9,404.9 1042.6,407.7 1043.3,405.1 1044.0,332.0 1044.7,406.3 1045.4,405.5 1046.1,346.9 1046.8,343.6 1047.5,405.4 1048.2,406.6 1048.9,408.0 1049.6,408.2 1050.3,407.9 1051.0,406.2 1051.8,387.9 1052.5,404.7 1053.2,407.7 1053.9,407.3 1054.6,322.0 1055.3,404.7 1056.0,404.9 1056.7,407.1 1057.4,405.1 1058.1,405.7 1058.8,406.9 1059.5,391.4 1060.2,370.9 1060.9,404.9 1061.6,405.6 1062.3,407.9 1063.0,406.2 1063.7,406.9 1064.4,405.7 1065.2,405.0 1065.9,405.6 1066.6,407.9 1067.3,407.4 1068.0,405.3 1068.7,341.0 1069.4,406.0 1070.1,404.8 1070.8,407.6 1071.5,405.9 1072.2,406.6 1072.9,407.9 1073.6,405.6 1074.3,407.9 1075.0,339.2 1075.7,405.9 1076.4,405.7 1077.1,406.5 1077.8,405.5 1078.6,406.7 1079.3,408.3 1080.0,394.9 1080.7,404.7 1081.4,405.0 1082.1,405.0 1082.8,404.7 1083.5,405.3 1084.2,407.1 1084.9,406.3 1085.6,405.2 1086.3,406.7 1087.0,407.8 1087.7,407.3 1088.4,395.2 1089.1,408.0 1089.8,407.1 1090.5,405.7 1091.2,395.3 1092.0,400.2 1092.7,405.3 1093.4,406.3 1094.1,384.8 1094.8,404.8 1095.5,400.4 1096.2,407.4 1096.9,405.9 1097.6,405.5 1098.3,408.1 1099.0,390.7 1099.7,336.5 1100.4,406.1 1101.1,390.5 1101.8,407.6 1102.5,408.1 1103.2,393.0 1103.9,406.2 1104.6,391.6 1105.4,407.9 1106.1,405.7 1106.8,406.2 1107.5,401.8 1108.2,405.2 1108.9,376.4 1109.6,394.9 1110.3,408.1 1111.0,404.8 1111.7,408.1 1112.4,407.3 1113.1,406.6 1113.8,405.1 1114.5,406.0 1115.2,408.2 1115.9,391.1 1116.6,405.0 1117.3,392.7 1118.0,407.8 1118.8,407.4 1119.5,408.2 1120.2,407.3 1120.9,407.6 1121.6,408.2 1122.3,407.9 1123.0,406.4 1123.7,407.5 1124.4,405.6 1125.1,394.4 1125.8,407.4 1126.5,406.0 1127.2,405.7 1127.9,404.7 1128.6,406.3 1129.3,406.2 1130.0,394.6 1130.7,407.7 1131.4,407.9 1132.2,408.2 1132.9,407.8 1133.6,405.5 1134.3,406.2 1135.0,392.7 1135.7,397.6 1136.4,405.4 1137.1,400.4 1137.8,402.1 1138.5,406.3 1139.2,404.9 1139.9,408.2 1140.6,365.0 1141.3,407.7 1142.0,406.8 1142.7,407.6 1143.4,405.9 1144.1,399.7 1144.8,407.4 1145.6,408.0 1146.3,385.7 1147.0,407.9 1147.7,399.7 1148.4,393.6 1149.1,406.8 1149.8,407.8 1150.5,395.2 1151.2,390.5 1151.9,406.3 1152.6,398.2 1153.3,384.4 1154.0,405.3 1154.7,389.4 1155.4,406.5 1156.1,402.6 1156.8,404.9 1157.5,405.2 1158.2,405.2 1159.0,405.0 1159.7,406.1 1160.4,406.4 1161.1,407.1 1161.8,395.0 1162.5,383.3 1163.2,393.9 1163.9,405.4 1164.6,392.1 1165.3,404.8 1166.0,407.6 1166.7,402.3 1167.4,408.3 1168.1,408.2 1168.8,394.1 1169.5,406.3 1170.2,408.1 1170.9,389.8 1171.6,406.8 1172.4,384.5 1173.1,407.8 1173.8,406.2 1174.5,408.0 1175.2,363.5 1175.9,390.2 1176.6,407.7 1177.3,402.4 1178.0,406.1 1178.7,407.5 1179.4,405.7 1180.1,407.3 1180.8,381.3 1181.5,407.1 1182.2,405.4 1182.9,407.6 1183.6,390.1 1184.3,408.1 1185.0,406.0 1185.8,407.4 1186.5,368.7 1187.2,407.6 1187.9,384.6 1188.6,407.2 1189.3,405.7 1190.0,394.6 1190.7,405.1 1191.4,406.9 1192.1,405.9 1192.8,393.3 1193.5,397.2 1194.2,407.3 1194.9,400.5 1195.6,406.5 1196.3,405.4 1197.0,407.1 1197.7,408.2 1198.4,406.2 1199.2,407.8 1199.9,391.7 1200.6,392.9 1201.3,393.8 1202.0,407.9 1202.7,406.7 1203.4,407.7 1204.1,365.5 1204.8,406.0 1205.5,405.9 1206.2,406.5 1206.9,401.1 1207.6,379.4 1208.3,406.0 1209.0,395.8 1209.7,407.3 1210.4,405.7 1211.1,408.2 1211.8,406.4 1212.6,405.0 1213.3,394.7 1214.0,405.6 1214.7,392.1 1215.4,407.5 1216.1,407.1 1216.8,406.4 1217.5,394.6 1218.2,406.3 1218.9,408.1 1219.6,391.5 1220.3,407.1 1221.0,405.1 1221.7,406.5 1222.4,406.9 1223.1,407.0 1223.8,389.2 1224.5,407.6 1225.2,405.8 1226.0,404.8 1226.7,407.6 1227.4,407.4 1228.1,389.3 1228.8,408.3 1229.5,407.7 1230.2,406.2 1230.9,402.5 1231.6,405.9 1232.3,395.9 1233.0,407.4 1233.7,407.7 1234.4,405.8 1235.1,406.3 1235.8,407.7 1236.5,406.6 1237.2,407.8 1237.9,406.1 1238.6,407.1 1239.4,405.6 1240.1,406.6 1240.8,405.9 1241.5,408.0 1242.2,407.8 1242.9,390.8 1243.6,405.0 1244.3,391.8 1245.0,384.9 1245.7,407.3 1246.4,405.3 1247.1,405.6 1247.8,407.6 1248.5,392.2 1249.2,406.4 1249.9,406.2 1250.6,406.4 1251.3,406.5 1252.0,378.5 1252.8,406.4 1253.5,406.3 1254.2,406.6 1254.9,407.0 1255.6,401.0 1256.3,391.3 1257.0,395.3 1257.7,406.1 1258.4,405.1 1259.1,408.2 1259.8,397.0 1260.5,405.0 1261.2,407.1 1261.9,404.7 1262.6,406.9 1263.3,405.6 1264.0,399.7 1264.7,405.3 1265.4,406.0 1266.2,406.5 1266.9,407.6 1267.6,407.1 1268.3,392.6 1269.0,406.0 1269.7,408.0 1270.4,408.3 1271.1,407.8 1271.8,407.8 1272.5,392.4 1273.2,406.2 1273.9,406.0 1274.6,406.4 1275.3,406.6 1276.0,370.2 1276.7,407.2 1277.4,408.1 1278.1,407.1 1278.8,405.5 1279.6,396.9 1280.3,408.2 1281.0,407.0 1281.7,402.1 1282.4,406.1 1283.1,393.9 1283.8,399.2 1284.5,404.9 1285.2,401.9 1285.9,406.6 1286.6,406.2 1287.3,389.3 1288.0,405.6 1288.7,406.6 1289.4,406.7 1290.1,406.2 1290.8,405.1 1291.5,406.6 1292.2,404.7 1293.0,330.0 1293.7,399.4 1294.4,407.9 1295.1,406.0 1295.8,335.0 1296.5,405.6 1297.2,406.8 1297.9,407.2 1298.6,407.4 1299.3,407.4 1300.0,405.4 1300.7,408.3 1301.4,405.3 1302.1,407.6 1302.8,342.2 1303.5,407.1 1304.2,391.9 1304.9,405.3 1305.6,408.1 1306.4,390.9 1307.1,407.7 1307.8,405.0 1308.5,387.8 1309.2,206.0 1309.9,395.9 1310.6,407.0 1311.3,405.3 1312.0,400.8 1312.7,407.2 1313.4,384.0 1314.1,404.7 1314.8,406.7 1315.5,395.8 1316.2,407.5 1316.9,405.4 1317.6,405.2 1318.3,405.3 1319.1,401.6 1319.8,407.6 1320.5,398.6 1321.2,408.0 1321.9,406.8 1322.6,405.2 1323.3,384.3 1324.0,371.4 1324.7,407.1 1325.4,405.2 1326.1,405.8 1326.8,406.7 1327.5,408.0 1328.2,399.6 1328.9,371.5 1329.6,384.7 1330.3,407.7 1331.0,406.4 1331.7,401.0 1332.5,407.0 1333.2,407.2 1333.9,383.6 1334.6,399.7 1335.3,407.5 1336.0,335.0 1336.7,407.1 1337.4,405.7 1338.1,368.6 1338.8,406.3 1339.5,405.2 1340.2,384.3 1340.9,408.3 1341.6,391.5 1342.3,334.1 1343.0,405.4 1343.7,406.4 1344.4,406.3 1345.1,407.7 1345.9,406.1 1346.6,395.5 1347.3,350.3 1348.0,390.9 1348.7,405.9 1349.4,404.8 1350.1,404.9 1350.8,407.3 1351.5,405.2 1352.2,405.3 1352.9,389.3 1353.6,407.6 1354.3,406.6 1355.0,408.1 1355.7,384.6 1356.4,407.7 1357.1,406.5 1357.8,404.8 1358.5,397.9 1359.3,407.9 1360.0,406.2 1360.7,406.8 1361.4,404.8 1362.1,406.7 1362.8,406.7 1363.5,405.9 1364.2,390.6 1364.9,405.9 1365.6,406.0 1366.3,407.3 1367.0,405.0 1367.7,349.5 1368.4,401.4 1369.1,342.7 1369.8,393.6 1370.5,408.3 1371.2,407.8 1371.9,407.4 1372.7,405.5 1373.4,383.6 1374.1,406.1 1374.8,406.9 1375.5,399.8 1376.2,404.8 1376.9,407.3 1377.6,406.4 1378.3,401.5 1379.0,407.2 1379.7,407.8 1380.4,405.7 1381.1,407.7 1381.8,388.9 1382.5,405.4 1383.2,407.4 1383.9,395.0 1384.6,404.7 1385.3,406.3 1386.1,406.0 1386.8,363.3 1387.5,393.6 1388.2,407.4 1388.9,406.8 1389.6,405.0 1390.3,407.6 1391.0,405.1 1391.7,405.4 1392.4,391.0 1393.1,406.4 1393.8,396.7 1394.5,407.1 1395.2,401.7 1395.9,405.6 1396.6,407.2 1397.3,406.0 1398.0,407.5 1398.7,407.3 1399.5,407.3 1400.2,405.4 1400.9,405.2 1401.6,408.2 1402.3,407.5 1403.0,408.0 1403.7,406.2 1404.4,396.2 1405.1,395.0 1405.8,397.6 1406.5,393.9 1407.2,402.7 1407.9,406.5 1408.6,406.5 1409.3,408.2 1410.0,408.0 1410.7,407.9 1411.4,405.5 1412.1,405.5 1412.9,406.2 1413.6,405.8 1414.3,404.8 1415.0,404.9 1415.7,392.0 1416.4,405.7 1417.1,405.2 1417.8,388.9 1418.5,405.6 1419.2,404.8 1419.9,405.5 1420.6,407.5 1421.3,405.7 1422.0,389.0 1422.7,406.1 1423.4,405.1 1424.1,405.9 1424.8,407.2 1425.5,403.0 1426.3,406.0 1427.0,395.3 1427.7,407.5 1428.4,400.1 1429.1,407.5 1429.8,406.1 1430.5,408.3 1431.2,405.9 1431.9,406.8 1432.6,405.8 1433.3,407.2 1434.0,406.8 1434.7,389.2 1435.4,398.4 1436.1,394.7 1436.8,397.0 1437.5,407.8 1438.2,408.2 1438.9,407.5 1439.7,407.7 1440.4,406.9 1441.1,401.9 1441.8,407.0 1442.5,405.6 1443.2,407.7 1443.9,407.4 1444.6,405.4 1445.3,393.8 1446.0,406.9" fill="none" stroke="#4b46e6" stroke-width="1.9" stroke-linejoin="round"/>
<polyline points="911.4,408.3 912.1,408.3 912.8,408.3 913.5,408.3 914.2,408.3 914.9,408.3 915.6,408.3 916.3,408.3 917.0,408.3 917.7,408.3 918.5,408.3 919.2,408.3 919.9,408.3 920.6,408.3 921.3,408.3 922.0,408.3 922.7,408.3 923.4,406.6 924.1,408.3 924.8,408.3 925.5,407.6 926.2,406.2 926.9,408.3 927.6,408.3 928.3,408.3 929.0,408.3 929.7,408.3 930.4,408.3 931.1,408.3 931.9,408.3 932.6,408.3 933.3,408.3 934.0,408.3 934.7,408.3 935.4,408.3 936.1,408.3 936.8,408.3 937.5,408.3 938.2,408.3 938.9,408.3 939.6,408.3 940.3,408.3 941.0,408.3 941.7,407.7 942.4,408.3 943.1,408.3 943.8,408.3 944.5,408.3 945.3,408.3 946.0,408.3 946.7,408.3 947.4,408.3 948.1,408.3 948.8,408.3 949.5,408.3 950.2,389.0 950.9,408.3 951.6,399.2 952.3,408.3 953.0,408.3 953.7,408.3 954.4,408.3 955.1,408.3 955.8,408.3 956.5,407.5 957.2,408.3 957.9,408.3 958.7,408.3 959.4,408.3 960.1,408.3 960.8,408.3 961.5,408.3 962.2,408.3 962.9,408.3 963.6,408.3 964.3,408.3 965.0,408.3 965.7,408.3 966.4,408.3 967.1,408.3 967.8,408.3 968.5,408.3 969.2,408.3 969.9,408.3 970.6,407.0 971.3,408.3 972.1,408.3 972.8,408.3 973.5,408.3 974.2,408.3 974.9,408.3 975.6,408.3 976.3,408.3 977.0,408.3 977.7,408.3 978.4,408.3 979.1,408.3 979.8,408.3 980.5,408.3 981.2,408.3 981.9,408.3 982.6,408.3 983.3,407.2 984.0,408.3 984.7,408.3 985.5,408.3 986.2,408.3 986.9,408.3 987.6,408.3 988.3,408.3 989.0,406.8 989.7,408.3 990.4,408.3 991.1,408.3 991.8,407.4 992.5,406.3 993.2,405.8 993.9,408.3 994.6,408.3 995.3,408.3 996.0,408.3 996.7,408.3 997.4,408.3 998.1,408.3 998.9,408.3 999.6,408.3 1000.3,408.3 1001.0,408.3 1001.7,408.3 1002.4,408.3 1003.1,408.3 1003.8,408.3 1004.5,408.3 1005.2,408.3 1005.9,408.3 1006.6,408.3 1007.3,408.3 1008.0,408.3 1008.7,408.3 1009.4,408.3 1010.1,408.3 1010.8,408.3 1011.5,408.3 1012.3,408.3 1013.0,408.3 1013.7,408.3 1014.4,408.3 1015.1,408.3 1015.8,408.3 1016.5,408.3 1017.2,407.3 1017.9,408.3 1018.6,405.4 1019.3,408.3 1020.0,405.4 1020.7,408.3 1021.4,408.3 1022.1,408.3 1022.8,408.3 1023.5,408.3 1024.2,408.3 1024.9,408.3 1025.7,408.3 1026.4,408.3 1027.1,407.7 1027.8,408.3 1028.5,408.3 1029.2,408.3 1029.9,408.3 1030.6,408.3 1031.3,408.3 1032.0,408.3 1032.7,408.3 1033.4,408.3 1034.1,408.3 1034.8,408.3 1035.5,408.3 1036.2,408.3 1036.9,408.3 1037.6,406.5 1038.3,408.3 1039.1,408.3 1039.8,408.3 1040.5,408.3 1041.2,408.3 1041.9,408.3 1042.6,408.3 1043.3,408.3 1044.0,408.3 1044.7,408.3 1045.4,408.3 1046.1,408.3 1046.8,408.3 1047.5,408.3 1048.2,408.3 1048.9,407.0 1049.6,408.3 1050.3,408.3 1051.0,408.3 1051.8,406.2 1052.5,408.3 1053.2,406.1 1053.9,408.3 1054.6,393.7 1055.3,408.3 1056.0,408.3 1056.7,408.3 1057.4,408.3 1058.1,408.3 1058.8,408.3 1059.5,408.3 1060.2,408.3 1060.9,408.3 1061.6,406.3 1062.3,408.3 1063.0,408.3 1063.7,406.1 1064.4,408.3 1065.2,408.3 1065.9,400.3 1066.6,407.7 1067.3,408.3 1068.0,408.3 1068.7,405.3 1069.4,405.5 1070.1,408.3 1070.8,408.3 1071.5,408.3 1072.2,408.3 1072.9,405.6 1073.6,408.3 1074.3,408.3 1075.0,408.3 1075.7,408.3 1076.4,407.7 1077.1,408.3 1077.8,408.3 1078.6,408.3 1079.3,408.3 1080.0,408.3 1080.7,408.3 1081.4,408.3 1082.1,408.3 1082.8,407.1 1083.5,408.3 1084.2,408.3 1084.9,408.3 1085.6,408.3 1086.3,408.3 1087.0,408.3 1087.7,408.3 1088.4,408.3 1089.1,408.3 1089.8,408.3 1090.5,408.3 1091.2,408.3 1092.0,408.3 1092.7,408.3 1093.4,408.3 1094.1,408.3 1094.8,408.3 1095.5,408.3 1096.2,405.7 1096.9,408.3 1097.6,406.5 1098.3,408.3 1099.0,408.3 1099.7,408.3 1100.4,408.3 1101.1,408.3 1101.8,405.4 1102.5,408.3 1103.2,406.3 1103.9,408.3 1104.6,408.3 1105.4,408.3 1106.1,408.3 1106.8,408.3 1107.5,408.3 1108.2,408.3 1108.9,408.3 1109.6,408.3 1110.3,408.3 1111.0,408.3 1111.7,408.3 1112.4,408.3 1113.1,408.3 1113.8,408.3 1114.5,408.3 1115.2,408.3 1115.9,408.3 1116.6,397.4 1117.3,408.3 1118.0,408.3 1118.8,408.3 1119.5,408.3 1120.2,408.3 1120.9,408.3 1121.6,408.3 1122.3,408.3 1123.0,408.3 1123.7,408.3 1124.4,408.3 1125.1,408.3 1125.8,408.3 1126.5,408.3 1127.2,406.6 1127.9,408.3 1128.6,408.3 1129.3,408.3 1130.0,408.3 1130.7,408.3 1131.4,408.3 1132.2,408.3 1132.9,408.3 1133.6,408.3 1134.3,406.4 1135.0,408.3 1135.7,405.9 1136.4,394.0 1137.1,408.3 1137.8,408.3 1138.5,408.3 1139.2,408.3 1139.9,408.3 1140.6,406.6 1141.3,408.3 1142.0,408.3 1142.7,408.3 1143.4,408.3 1144.1,408.3 1144.8,408.3 1145.6,407.3 1146.3,408.3 1147.0,408.3 1147.7,408.3 1148.4,408.3 1149.1,408.3 1149.8,408.3 1150.5,408.3 1151.2,408.3 1151.9,408.3 1152.6,408.3 1153.3,406.9 1154.0,408.3 1154.7,408.3 1155.4,408.3 1156.1,408.3 1156.8,405.7 1157.5,408.3 1158.2,408.3 1159.0,408.3 1159.7,408.3 1160.4,408.3 1161.1,408.3 1161.8,408.3 1162.5,408.3 1163.2,408.3 1163.9,408.3 1164.6,408.3 1165.3,408.3 1166.0,408.3 1166.7,405.9 1167.4,408.3 1168.1,408.3 1168.8,408.3 1169.5,408.3 1170.2,408.3 1170.9,408.3 1171.6,408.3 1172.4,405.9 1173.1,408.3 1173.8,408.3 1174.5,408.3 1175.2,408.3 1175.9,408.3 1176.6,405.8 1177.3,408.3 1178.0,408.3 1178.7,408.3 1179.4,408.3 1180.1,408.3 1180.8,405.4 1181.5,408.3 1182.2,407.5 1182.9,408.3 1183.6,408.3 1184.3,408.3 1185.0,408.3 1185.8,408.3 1186.5,408.3 1187.2,405.7 1187.9,408.3 1188.6,408.3 1189.3,408.3 1190.0,408.3 1190.7,408.3 1191.4,406.4 1192.1,408.3 1192.8,408.3 1193.5,408.3 1194.2,408.3 1194.9,408.3 1195.6,408.3 1196.3,408.3 1197.0,408.3 1197.7,408.3 1198.4,408.3 1199.2,408.3 1199.9,408.3 1200.6,408.3 1201.3,408.3 1202.0,408.3 1202.7,408.3 1203.4,408.3 1204.1,408.3 1204.8,408.3 1205.5,408.3 1206.2,406.0 1206.9,406.6 1207.6,408.3 1208.3,405.4 1209.0,408.3 1209.7,408.3 1210.4,408.3 1211.1,408.3 1211.8,408.3 1212.6,408.3 1213.3,408.3 1214.0,408.3 1214.7,408.3 1215.4,406.3 1216.1,406.3 1216.8,406.5 1217.5,407.2 1218.2,408.3 1218.9,408.3 1219.6,408.3 1220.3,408.3 1221.0,408.3 1221.7,394.0 1222.4,408.3 1223.1,408.3 1223.8,408.3 1224.5,408.3 1225.2,408.3 1226.0,408.3 1226.7,408.3 1227.4,408.3 1228.1,405.9 1228.8,408.3 1229.5,408.3 1230.2,408.3 1230.9,408.3 1231.6,405.8 1232.3,408.3 1233.0,408.3 1233.7,408.3 1234.4,408.3 1235.1,408.3 1235.8,408.3 1236.5,408.3 1237.2,408.3 1237.9,408.3 1238.6,408.3 1239.4,408.3 1240.1,408.3 1240.8,408.3 1241.5,408.3 1242.2,406.4 1242.9,408.3 1243.6,408.3 1244.3,405.6 1245.0,408.3 1245.7,408.3 1246.4,408.3 1247.1,408.3 1247.8,408.3 1248.5,408.3 1249.2,408.3 1249.9,408.3 1250.6,406.6 1251.3,408.3 1252.0,408.3 1252.8,406.2 1253.5,406.4 1254.2,408.3 1254.9,408.3 1255.6,408.3 1256.3,408.3 1257.0,408.3 1257.7,408.3 1258.4,408.3 1259.1,408.3 1259.8,408.3 1260.5,408.3 1261.2,405.4 1261.9,408.3 1262.6,408.3 1263.3,408.3 1264.0,408.3 1264.7,408.3 1265.4,408.3 1266.2,408.3 1266.9,408.3 1267.6,408.3 1268.3,408.3 1269.0,400.4 1269.7,408.3 1270.4,408.3 1271.1,408.3 1271.8,408.3 1272.5,408.3 1273.2,408.3 1273.9,408.3 1274.6,408.3 1275.3,408.3 1276.0,408.3 1276.7,408.3 1277.4,407.3 1278.1,408.3 1278.8,408.3 1279.6,408.3 1280.3,408.3 1281.0,408.3 1281.7,408.3 1282.4,408.3 1283.1,408.3 1283.8,408.3 1284.5,408.3 1285.2,408.3 1285.9,408.3 1286.6,408.3 1287.3,408.3 1288.0,408.3 1288.7,408.3 1289.4,408.3 1290.1,408.3 1290.8,408.3 1291.5,401.3 1292.2,408.3 1293.0,408.3 1293.7,408.3 1294.4,408.3 1295.1,408.3 1295.8,408.3 1296.5,406.6 1297.2,408.3 1297.9,406.4 1298.6,408.3 1299.3,392.4 1300.0,408.3 1300.7,408.3 1301.4,408.3 1302.1,408.3 1302.8,408.3 1303.5,408.3 1304.2,408.3 1304.9,408.3 1305.6,408.3 1306.4,408.3 1307.1,408.3 1307.8,408.3 1308.5,408.3 1309.2,408.3 1309.9,408.3 1310.6,408.3 1311.3,408.3 1312.0,408.3 1312.7,408.3 1313.4,408.3 1314.1,408.3 1314.8,408.3 1315.5,401.8 1316.2,408.3 1316.9,408.3 1317.6,408.3 1318.3,406.3 1319.1,408.3 1319.8,408.3 1320.5,408.3 1321.2,408.3 1321.9,408.3 1322.6,392.0 1323.3,408.3 1324.0,408.3 1324.7,408.3 1325.4,408.3 1326.1,408.3 1326.8,408.3 1327.5,408.3 1328.2,408.3 1328.9,408.3 1329.6,408.3 1330.3,408.3 1331.0,408.3 1331.7,406.0 1332.5,408.3 1333.2,408.3 1333.9,408.3 1334.6,408.3 1335.3,408.3 1336.0,406.4 1336.7,408.3 1337.4,408.3 1338.1,408.3 1338.8,408.3 1339.5,408.3 1340.2,408.3 1340.9,408.3 1341.6,408.3 1342.3,408.3 1343.0,408.3 1343.7,405.9 1344.4,408.3 1345.1,408.3 1345.9,408.3 1346.6,408.3 1347.3,408.3 1348.0,408.3 1348.7,405.8 1349.4,408.3 1350.1,408.3 1350.8,408.3 1351.5,405.5 1352.2,408.3 1352.9,408.3 1353.6,408.3 1354.3,408.3 1355.0,408.3 1355.7,408.3 1356.4,408.3 1357.1,408.3 1357.8,407.4 1358.5,408.3 1359.3,408.3 1360.0,408.3 1360.7,408.3 1361.4,408.3 1362.1,408.3 1362.8,408.3 1363.5,408.3 1364.2,408.3 1364.9,408.3 1365.6,408.3 1366.3,408.3 1367.0,408.3 1367.7,408.3 1368.4,408.3 1369.1,408.3 1369.8,408.3 1370.5,408.3 1371.2,408.3 1371.9,408.3 1372.7,408.3 1373.4,408.3 1374.1,406.6 1374.8,408.3 1375.5,408.3 1376.2,408.3 1376.9,408.3 1377.6,406.8 1378.3,408.3 1379.0,408.3 1379.7,408.3 1380.4,408.3 1381.1,408.3 1381.8,408.3 1382.5,408.3 1383.2,408.3 1383.9,408.3 1384.6,408.3 1385.3,408.3 1386.1,408.3 1386.8,408.3 1387.5,407.2 1388.2,408.3 1388.9,408.3 1389.6,408.3 1390.3,408.3 1391.0,408.3 1391.7,408.3 1392.4,406.8 1393.1,407.5 1393.8,406.6 1394.5,408.3 1395.2,408.3 1395.9,408.3 1396.6,407.2 1397.3,408.3 1398.0,408.3 1398.7,408.3 1399.5,408.3 1400.2,408.3 1400.9,408.3 1401.6,407.1 1402.3,408.3 1403.0,408.3 1403.7,408.3 1404.4,408.3 1405.1,407.5 1405.8,407.4 1406.5,408.3 1407.2,408.3 1407.9,408.3 1408.6,408.3 1409.3,408.3 1410.0,408.3 1410.7,408.3 1411.4,408.3 1412.1,408.3 1412.9,406.9 1413.6,406.3 1414.3,408.3 1415.0,408.3 1415.7,408.3 1416.4,408.3 1417.1,408.3 1417.8,405.8 1418.5,408.3 1419.2,408.3 1419.9,408.3 1420.6,408.3 1421.3,408.3 1422.0,408.3 1422.7,386.0 1423.4,407.2 1424.1,408.3 1424.8,408.3 1425.5,408.3 1426.3,408.3 1427.0,408.3 1427.7,408.3 1428.4,408.3 1429.1,408.3 1429.8,408.3 1430.5,408.3 1431.2,408.3 1431.9,408.3 1432.6,408.3 1433.3,408.3 1434.0,408.3 1434.7,408.3 1435.4,406.4 1436.1,405.6 1436.8,408.3 1437.5,408.3 1438.2,408.3 1438.9,408.3 1439.7,408.3 1440.4,408.3 1441.1,408.3 1441.8,408.3 1442.5,407.6 1443.2,408.3 1443.9,408.3 1444.6,408.3 1445.3,408.3 1446.0,406.7" fill="none" stroke="#700a8c" stroke-width="2" stroke-linejoin="round"/>
</svg>
<div class="t" style="top:168.07px;font-size:11.5px;color:#5f6368;right:45.12px;letter-spacing:-0.122px;">40.0%</div>
<div class="t" style="top:228.87px;font-size:11.5px;color:#5f6368;right:45.12px;letter-spacing:-0.122px;">30.0%</div>
<div class="t" style="top:289.67px;font-size:11.5px;color:#5f6368;right:45.12px;letter-spacing:-0.122px;">20.0%</div>
<div class="t" style="top:350.27px;font-size:11.5px;color:#5f6368;right:45.12px;letter-spacing:-0.122px;">10.0%</div>
<div class="t" style="top:394.57px;font-size:11.5px;color:#5f6368;right:45.05px;letter-spacing:-0.053px;">0.0%</div>
<div class="t" style="top:413.84px;font-size:12px;color:#5f6368;left:916.63px;">01</div>
<div class="t" style="top:425.84px;font-size:12px;color:#5f6368;left:916.63px;">Jan</div>
<div class="t" style="top:413.84px;font-size:12px;color:#5f6368;left:972.43px;">01</div>
<div class="t" style="top:425.84px;font-size:12px;color:#5f6368;left:969.77px;">Apr</div>
<div class="t" style="top:413.84px;font-size:12px;color:#5f6368;left:1036.61px;">01</div>
<div class="t" style="top:425.84px;font-size:12px;color:#5f6368;left:1035.62px;">Jul</div>
<div class="t" style="top:413.84px;font-size:12px;color:#5f6368;left:1101.50px;">01</div>
<div class="t" style="top:425.84px;font-size:12px;color:#5f6368;left:1098.84px;">Oct</div>
<div class="t" style="top:413.84px;font-size:12px;color:#5f6368;left:1166.38px;">01</div>
<div class="t" style="top:425.84px;font-size:12px;color:#5f6368;left:1163.38px;">Jan</div>
<div class="t" style="top:413.84px;font-size:12px;color:#5f6368;left:1230.56px;">01</div>
<div class="t" style="top:425.84px;font-size:12px;color:#5f6368;left:1227.90px;">Apr</div>
<div class="t" style="top:413.84px;font-size:12px;color:#5f6368;left:1294.74px;">01</div>
<div class="t" style="top:425.84px;font-size:12px;color:#5f6368;left:1293.75px;">Jul</div>
<div class="t" style="top:413.84px;font-size:12px;color:#5f6368;left:1359.63px;">01</div>
<div class="t" style="top:425.84px;font-size:12px;color:#5f6368;left:1356.97px;">Oct</div>
<div class="t" style="top:413.84px;font-size:12px;color:#5f6368;left:1417.84px;">01</div>
<div class="t" style="top:425.84px;font-size:12px;color:#5f6368;left:1411.84px;">Jan</div>
<div class="t" style="top:459.15px;font-size:14px;color:#1a73e8;left:1369.00px;letter-spacing:0.538px;">View retention</div>
<svg class="abs" style="left:1474px;top:459px" width="16" height="14" viewBox="0 0 16 14"><path d="M1.5 7h12M8.6 1.8L13.8 7l-5.2 5.2" fill="none" stroke="#1a73e8" stroke-width="1.6"/></svg>
<div class="card" style="left:2px;top:546px;width:626px;height:360px"></div>
<div class="t" style="top:573.30px;font-size:15px;color:#202124;left:27.00px;letter-spacing:-0.058px;">Active users</div>
<svg class="abs" style="left:108px;top:579px" width="9" height="5" viewBox="0 0 9 5"><path d="M0 0h9L4.5 5z" fill="#5f6368"/></svg>
<div class="t" style="top:573.30px;font-size:15px;color:#3c4043;left:122.00px;">by</div>
<div class="t" style="top:573.30px;font-size:15px;color:#3c4043;left:142.00px;letter-spacing:0.354px;">Country</div>
<div class="abs" style="left:142px;top:590px;width:55px;height:1px;background:repeating-linear-gradient(90deg,#6b6f74 0 2.5px,transparent 2.5px 4px)"></div>
<div class="pill" style="left:543px;top:571px;width:60px;height:28px"></div>
<svg class="abs" style="left:550px;top:575px" width="20" height="20" viewBox="0 0 20 20"><circle cx="10" cy="10" r="7.4" fill="none" stroke="#0d652d" stroke-width="1.7"/><path d="M6.3 10.2l2.6 2.6 4.9-5.2" fill="none" stroke="#0d652d" stroke-width="1.8"/></svg>
<svg class="abs" style="left:582px;top:582.5px" width="9" height="5" viewBox="0 0 9 5"><path d="M0 0h9L4.5 5z" fill="#5f6368"/></svg>
<div class="t" style="top:618.84px;font-size:12px;color:#5f6368;left:373.50px;-webkit-text-stroke:0.36px #5f6368;letter-spacing:0.198px;">COUNTRY</div>
<div class="abs" style="left:373px;top:634px;width:61px;height:1px;background:repeating-linear-gradient(90deg,#6b6f74 0 2.5px,transparent 2.5px 4px)"></div>
<div class="t" style="top:618.84px;font-size:12px;color:#5f6368;left:0.00px;-webkit-text-stroke:0.36px #5f6368;letter-spacing:0.332px;left:511px;">ACTIVE USERS</div>
<div class="abs" style="left:511px;top:634px;width:92px;height:1px;background:repeating-linear-gradient(90deg,#6b6f74 0 2.5px,transparent 2.5px 4px)"></div>
<div class="abs" style="left:373px;top:641px;width:230px;height:1px;background:#dadce0"></div>
<div class="t" style="top:652.14px;font-size:12px;color:#3c4043;left:374.00px;-webkit-text-stroke:0.36px #3c4043;letter-spacing:0.366px;">United States</div>
<div class="t" style="top:651.30px;font-size:13px;color:#3c4043;right:924.70px;">303K</div>
<div class="abs" style="left:373px;top:674px;width:230px;height:1px;background:#dadce0"></div>
<div class="abs" style="left:374px;top:673px;width:227px;height:2px;background:#1a73e8"></div>
<div class="t" style="top:684.14px;font-size:12px;color:#3c4043;left:374.00px;-webkit-text-stroke:0.36px #3c4043;letter-spacing:0.094px;">Canada</div>
<div class="t" style="top:683.30px;font-size:13px;color:#3c4043;right:924.70px;">956</div>
<div class="abs" style="left:373px;top:706px;width:230px;height:1px;background:#dadce0"></div>
<div class="abs" style="left:373px;top:705.5px;width:2px;height:2px;background:#1a73e8"></div>
<div class="t" style="top:716.14px;font-size:12px;color:#3c4043;left:374.00px;-webkit-text-stroke:0.36px #3c4043;letter-spacing:0.175px;">France</div>
<div class="t" style="top:715.30px;font-size:13px;color:#3c4043;right:924.70px;">362</div>
<div class="abs" style="left:373px;top:738px;width:230px;height:1px;background:#dadce0"></div>
<div class="abs" style="left:373px;top:737.5px;width:2px;height:2px;background:#1a73e8"></div>
<div class="t" style="top:748.14px;font-size:12px;color:#3c4043;left:374.00px;-webkit-text-stroke:0.36px #3c4043;letter-spacing:0.446px;">Australia</div>
<div class="t" style="top:747.30px;font-size:13px;color:#3c4043;right:924.70px;">342</div>
<div class="abs" style="left:373px;top:770px;width:230px;height:1px;background:#dadce0"></div>
<div class="abs" style="left:373px;top:769.5px;width:2px;height:2px;background:#1a73e8"></div>
<div class="t" style="top:780.14px;font-size:12px;color:#3c4043;left:374.00px;-webkit-text-stroke:0.36px #3c4043;letter-spacing:0.373px;">Indonesia</div>
<div class="t" style="top:779.30px;font-size:13px;color:#3c4043;right:924.70px;">247</div>
<div class="abs" style="left:373px;top:802px;width:230px;height:1px;background:#dadce0"></div>
<div class="abs" style="left:373px;top:801.5px;width:2px;height:2px;background:#1a73e8"></div>
<div class="t" style="top:812.14px;font-size:12px;color:#3c4043;left:374.00px;-webkit-text-stroke:0.36px #3c4043;letter-spacing:0.354px;">New Zealand</div>
<div class="t" style="top:811.30px;font-size:13px;color:#3c4043;right:924.70px;">204</div>
<div class="abs" style="left:373px;top:834px;width:230px;height:1px;background:#dadce0"></div>
<div class="abs" style="left:373px;top:833.5px;width:2px;height:2px;background:#1a73e8"></div>
<div class="t" style="top:844.14px;font-size:12px;color:#3c4043;left:374.00px;-webkit-text-stroke:0.36px #3c4043;letter-spacing:0.480px;">United Kingdom</div>
<div class="t" style="top:843.30px;font-size:13px;color:#3c4043;right:924.70px;">168</div>
<div class="abs" style="left:373px;top:865.5px;width:2px;height:2px;background:#1a73e8"></div>
<svg class="abs" style="left:40px;top:655px" width="335" height="200" viewBox="40 655 335 200">
<g stroke="#fff" stroke-linejoin="round">
<path d="M64.3 701.6L66.8 699.1L68.6 697.9L67.4 694.8L70.5 693.5L71.1 689.8L74.2 687.4L80.4 685.1L84.1 687.4L90.3 690.2L83.2 705.3L79.7 703.4L76.0 704.1L72.3 705.9L69.2 706.5L66.8 705.3L64.9 703.4Z" fill="#174ea6" stroke-width="0.6"/>
<path d="M83.2 705.3L84.4 705.0L86.9 708.0L88.6 712.1L89.9 716.4L91.1 721.1L90.1 721.4L88.6 717.0L87.4 712.5L85.7 708.8Z" fill="#174ea6" stroke-width="0.35"/>
<path d="M90.9 690.7L94.6 691.4L100.8 691.1L106.9 692.3L110.7 695.1L116.8 696.6L124.3 697.9L129.2 699.1L131.1 702.8L128.0 704.1L123.6 706.5L120.6 710.2L122.4 713.9L126.7 716.4L129.2 718.9L130.4 722.6L132.9 720.1L135.4 716.4L136.0 711.5L137.3 708.4L140.3 707.8L143.4 710.9L145.9 713.9L148.4 717.7L150.9 720.1L149.6 722.6L146.5 723.8L143.4 725.1L140.3 726.3L139.1 728.8L136.6 730.0L133.5 731.9L129.8 733.7L127.4 734.4L125.5 731.3L122.4 726.9L115.6 725.1L104.5 724.1L92.1 723.2L90.9 721.1L89.6 716.4L88.4 711.7L86.7 707.5L84.4 704.8Z" fill="#1967d2" stroke-width="0.6"/>
<path d="M106.3 686.1L108.8 683.3L112.5 682.4L113.8 684.9L111.3 687.4L108.2 688.2Z" fill="#1967d2" stroke-width="0.35"/>
<path d="M111.3 688.6L115.0 686.7L119.3 687.4L121.8 689.8L120.6 692.9L116.8 694.4L113.1 692.9Z" fill="#1967d2" stroke-width="0.35"/>
<path d="M113.1 678.1L116.8 676.6L119.9 678.3L118.1 681.2L114.4 681.2Z" fill="#1967d2" stroke-width="0.35"/>
<path d="M122.4 680.6L125.5 679.3L127.4 681.8L124.9 684.0L122.8 683.0Z" fill="#1967d2" stroke-width="0.35"/>
<path d="M122.4 686.1L126.1 685.3L128.0 688.6L126.7 692.3L123.6 692.9L122.4 689.8Z" fill="#1967d2" stroke-width="0.35"/>
<path d="M129.2 682.4L134.2 680.6L137.6 682.4L135.4 684.9L131.1 685.5Z" fill="#1967d2" stroke-width="0.35"/>
<path d="M132.3 675.6L136.0 673.8L137.3 678.1L134.8 680.6L132.7 678.7Z" fill="#1967d2" stroke-width="0.35"/>
<path d="M136.6 673.1L141.6 670.0L150.2 669.2L157.4 670.2L153.9 673.4L149.6 676.6L146.5 680.3L142.2 682.0L139.1 680.6L138.1 676.8Z" fill="#1967d2" stroke-width="0.6"/>
<path d="M130.4 689.5L136.6 687.4L141.6 689.8L146.5 693.9L149.6 699.7L147.8 703.8L144.3 705.5L141.6 703.4L143.4 699.7L140.3 696.9L136.0 695.1L132.3 692.9Z" fill="#1967d2" stroke-width="0.6"/>
<path d="M131.1 702.6L135.4 701.3L136.4 704.3L132.7 705.5Z" fill="#1967d2" stroke-width="0.35"/>
<path d="M126.1 693.5L129.2 692.9L130.7 697.9L129.0 699.1Z" fill="#1967d2" stroke-width="0.35"/>
<path d="M148.4 726.3L150.9 725.1L152.1 727.6L149.6 728.2Z" fill="#1967d2" stroke-width="0.15"/>
<path d="M140.3 728.2L142.2 727.6L142.6 730.0L141.0 730.6Z" fill="#1967d2" stroke-width="0.15"/>
<path d="M90.9 724.5L104.5 725.3L115.6 726.3L122.4 728.2L124.9 731.3L126.1 734.4L129.2 734.4L133.5 732.5L136.6 730.6L139.7 729.4L139.1 731.3L135.4 733.7L131.7 736.2L129.2 738.7L128.6 742.4L126.1 744.9L123.6 747.3L122.4 748.6L123.0 751.7L121.8 751.7L120.6 748.6L118.1 747.3L114.4 747.3L110.7 748.0L108.2 749.2L106.3 750.4L104.5 748.0L101.4 746.7L97.7 745.5L92.1 744.3L89.6 741.8L88.1 738.7L87.8 734.4L89.0 728.8Z" fill="#174ea6" stroke-width="0.6"/>
<path d="M92.1 744.9L97.7 746.1L101.4 747.3L104.5 748.6L106.0 751.1L106.7 754.1L107.6 757.2L109.4 759.7L112.5 760.3L114.4 758.5L116.2 757.9L115.6 759.7L113.8 762.2L110.7 762.4L108.2 760.9L104.5 759.7L101.4 756.6L98.9 752.9L96.4 749.2L94.6 746.7Z" fill="#1967d2" stroke-width="0.6"/>
<path d="M91.2 745.1L92.5 745.1L95.3 751.3L94.6 752.0Z" fill="#1967d2" stroke-width="0.15"/>
<path d="M58.1 690.4L60.6 687.4L63.7 691.7L60.6 694.4Z" fill="#8ab4f8" stroke-width="0.35"/>
<path d="M111.8 762.7L115.4 763.0L118.0 765.3L120.1 767.7L125.4 770.4L125.0 771.5L119.5 768.9L117.1 766.8L114.2 764.8Z" fill="#dcdcdc" stroke-width="0.35"/>
<path d="M149.3 680.6L152.4 678.1L156.7 674.4L164.7 671.9L174.6 670.7L183.3 671.3L189.5 675.0L185.8 677.5L185.1 682.4L183.3 686.7L181.4 691.7L180.8 694.8L177.1 697.9L172.2 700.3L167.8 704.1L164.7 707.8L162.9 710.2L160.4 708.4L158.6 704.1L158.6 697.9L159.2 691.7L157.3 686.7L153.6 683.0Z" fill="#dcdcdc" stroke-width="0.6"/>
<path d="M182.1 704.1L185.1 703.1L187.6 704.1L186.4 705.9L183.3 705.9Z" fill="#dcdcdc" stroke-width="0.35"/>
<path d="M207.4 679.3L211.7 677.8L216.7 677.5L214.2 679.3L212.4 681.8L210.5 682.4Z" fill="#8ab4f8" stroke-width="0.35"/>
<path d="M239.9 691.7L240.4 688.0L243.3 684.9L247.0 683.6L243.9 686.1L241.7 689.2L241.2 692.3Z" fill="#8ab4f8" stroke-width="0.35"/>
<path d="M263.1 672.5L268.0 674.4L267.4 675.4L263.7 673.8Z" fill="#8ab4f8" stroke-width="0.15"/>
<path d="M225.3 701.6L222.9 698.5L226.6 697.3L230.3 699.1L231.5 701.6L230.3 702.8L234.0 701.6L238.9 699.1L245.1 697.9L251.3 696.0L255.6 699.7L256.9 696.6L256.1 701.0L257.9 697.9L256.7 693.5L259.8 691.1L264.1 686.7L268.4 683.0L272.8 679.9L277.1 680.6L280.8 681.2L281.4 684.3L285.8 685.5L290.7 684.9L295.7 686.1L299.4 688.6L303.1 686.7L305.6 684.3L310.5 684.9L315.4 686.1L320.4 687.4L326.6 688.0L331.5 686.1L335.2 684.9L338.9 686.1L341.4 689.8L343.3 695.4L341.4 699.1L338.3 701.6L335.2 702.8L333.4 699.1L331.5 701.6L328.4 702.2L325.3 705.3L320.4 707.1L316.7 709.6L314.8 713.9L317.3 715.8L320.4 717.7L321.6 721.4L321.6 726.3L319.2 729.4L317.3 725.1L314.2 723.2L309.3 719.5L305.6 717.7L303.1 720.1L303.7 723.8L301.8 725.1L298.1 722.6L291.9 722.6L285.8 721.4L282.1 722.6L277.1 723.8L274.6 723.2L270.9 721.4L266.6 718.9L262.3 718.3L258.6 717.7L254.8 718.9L262.4 717.7L256.3 718.3L251.3 721.4L245.1 723.2L241.4 725.1L240.8 728.8L242.7 733.1L240.8 736.2L237.7 735.0L234.6 733.1L235.2 728.8L234.0 724.5L229.1 720.1L225.3 716.4L224.1 711.5L225.3 704.7Z" fill="#8ab4f8" stroke-width="0.6"/>
<path d="M332.1 705.3L334.0 704.7L335.2 709.0L336.2 713.9L335.5 716.4L333.8 713.3L332.1 709.6Z" fill="#8ab4f8" stroke-width="0.35"/>
<path d="M321.0 720.1L322.0 720.1L322.7 726.3L321.6 726.9Z" fill="#8ab4f8" stroke-width="0.15"/>
<path d="M262.9 672.5L265.4 672.1L268.4 675.0L266.6 675.6Z" fill="#8ab4f8" stroke-width="0.35"/>
<path d="M299.4 678.1L304.3 677.8L303.7 679.3L300.6 679.6Z" fill="#8ab4f8" stroke-width="0.15"/>
<path d="M204.3 709.6L207.4 706.5L210.5 701.6L214.2 697.3L219.2 695.4L222.3 696.0L219.2 697.3L216.1 699.1L213.0 704.1L209.9 709.0L207.4 713.3L204.9 712.7Z" fill="#8ab4f8" stroke-width="0.6"/>
<path d="M211.1 704.1L213.6 700.3L216.7 699.1L217.3 701.6L215.4 705.3L214.2 710.2L213.0 715.2L211.1 716.4L209.9 711.5Z" fill="#4285f4" stroke-width="0.6"/>
<path d="M218.5 698.5L221.6 697.9L224.1 702.8L224.7 707.8L221.6 710.9L218.5 710.2L217.9 705.3Z" fill="#aecbfa" stroke-width="0.6"/>
<path d="M195.0 715.2L196.9 716.4L198.1 719.5L200.0 722.6L199.4 724.5L196.3 723.8L197.5 721.4L195.7 718.9Z" fill="#1967d2" stroke-width="0.35"/>
<path d="M191.9 720.8L193.8 720.1L194.1 722.6L192.2 722.9Z" fill="#1967d2" stroke-width="0.15"/>
<path d="M197.5 727.6L200.6 726.3L203.1 725.1L205.6 727.6L204.3 730.6L204.9 733.7L201.8 734.4L199.4 733.7L199.1 730.6Z" fill="#1967d2" stroke-width="0.35"/>
<path d="M193.8 735.0L200.0 735.0L200.6 736.8L198.8 739.9L195.7 741.2L194.1 739.3Z" fill="#1967d2" stroke-width="0.35"/>
<path d="M191.9 735.0L193.8 735.0L194.1 739.9L192.6 739.9Z" fill="#4285f4" stroke-width="0.35"/>
<path d="M206.2 721.4L210.5 720.8L211.5 723.8L210.5 727.6L207.4 727.6L206.2 724.5Z" fill="#1967d2" stroke-width="0.35"/>
<path d="M213.0 720.8L217.9 720.8L219.2 723.8L217.3 725.7L213.6 724.5Z" fill="#4285f4" stroke-width="0.35"/>
<path d="M220.4 725.1L226.6 723.8L232.8 725.7L234.0 727.6L230.3 730.0L226.6 729.4L222.3 727.6Z" fill="#4285f4" stroke-width="0.35"/>
<path d="M221.6 718.9L225.3 718.3L226.6 722.0L222.9 722.6Z" fill="#aecbfa" stroke-width="0.35"/>
<path d="M219.2 729.4L224.1 728.8L225.3 731.3L221.6 733.1L219.2 731.9Z" fill="#8ab4f8" stroke-width="0.35"/>
<path d="M224.1 738.1L229.1 736.2L235.2 736.8L238.9 737.4L238.9 739.9L234.0 740.5L229.1 741.2L224.7 739.9Z" fill="#4285f4" stroke-width="0.35"/>
<path d="M203.1 723.6L205.8 722.9L206.0 725.3L203.7 725.7Z" fill="#4285f4" stroke-width="0.15"/>
<path d="M211.1 728.2L215.4 727.6L216.1 729.4L211.7 730.0Z" fill="#8ab4f8" stroke-width="0.35"/>
<path d="M191.3 747.9L195.8 744.0L199.2 742.3L205.4 741.7L208.7 743.4L211.0 746.2L217.7 747.4L222.2 746.8L223.9 747.9L229.0 747.9L232.9 748.5L233.5 753.0L235.2 757.5L236.9 762.0L239.1 765.4L242.5 768.2L247.0 767.6L245.9 771.0L242.5 775.5L239.7 778.3L238.0 782.2L237.4 786.7L238.0 791.2L236.3 794.6L233.5 798.0L230.1 800.8L229.0 803.6L227.9 807.0L225.6 810.4L222.2 812.6L217.7 813.5L216.4 809.8L214.4 804.7L212.7 799.1L211.6 794.6L213.8 789.0L213.2 784.5L211.0 780.0L208.7 776.6L208.7 773.2L205.9 773.8L203.1 772.7L197.5 773.2L191.9 772.7L187.9 771.0L185.1 767.6L183.8 763.7L184.6 758.6L186.2 754.7L189.1 750.7Z" fill="#dcdcdc" stroke-width="0.6"/>
<path d="M191.3 747.9L193.6 745.1L196.4 744.0L196.9 745.7L194.7 747.9L191.9 749.1Z" fill="#1967d2" stroke-width="0.35"/>
<path d="M192.4 750.7L197.5 746.2L199.2 742.6L205.4 742.0L207.1 745.1L208.2 749.6L208.7 755.8L203.7 759.2L200.3 756.9L196.4 753.6Z" fill="#aecbfa" stroke-width="0.6"/>
<path d="M223.9 748.3L229.0 748.3L230.7 751.9L232.4 756.4L224.2 756.6Z" fill="#4285f4" stroke-width="0.35"/>
<path d="M203.7 767.1L212.1 767.1L211.0 771.0L208.2 772.7L205.4 773.8L203.1 771.6Z" fill="#4285f4" stroke-width="0.35"/>
<path d="M233.5 768.7L236.3 765.9L239.1 766.5L241.9 769.3L243.6 772.1L239.1 774.4L235.7 774.4L233.3 771.6Z" fill="#aecbfa" stroke-width="0.35"/>
<path d="M216.4 808.7L219.4 807.0L222.2 805.9L225.6 803.1L228.8 802.3L229.2 805.3L227.9 808.7L225.1 811.5L221.1 812.8L217.5 813.5Z" fill="#1967d2" stroke-width="0.6"/>
<path d="M241.4 801.4L243.6 796.3L246.4 792.4L247.0 794.6L245.3 799.7L243.1 803.6L241.4 803.6Z" fill="#dcdcdc" stroke-width="0.35"/>
<path d="M184.0 764.0L186.2 764.5L186.8 766.3L184.9 765.9Z" fill="#aecbfa" stroke-width="0.15"/>
<path d="M241.4 740.6L247.0 739.5L253.7 741.7L258.2 746.2L260.5 750.7L257.1 749.6L252.6 748.5L248.1 747.4L244.7 746.2L242.5 743.4Z" fill="#dcdcdc" stroke-width="0.6"/>
<path d="M233.5 749.6L236.9 747.4L240.2 749.1L244.7 753.0L248.1 756.4L252.6 757.5L251.5 759.2L248.1 760.3L243.6 760.9L240.8 759.2L238.0 755.8L235.2 752.4Z" fill="#1967d2" stroke-width="0.6"/>
<path d="M241.4 761.4L248.1 760.9L252.6 758.6L255.4 759.2L253.7 763.1L250.4 764.8L244.7 767.1L242.5 764.5Z" fill="#dcdcdc" stroke-width="0.6"/>
<path d="M252.6 756.9L255.1 756.1L254.3 758.6Z" fill="#8ab4f8" stroke-width="0.15"/>
<path d="M237.4 742.3L240.2 742.9L242.5 746.2L241.4 748.5L238.6 746.2Z" fill="#aecbfa" stroke-width="0.35"/>
<path d="M240.0 723.8L246.2 722.6L251.1 721.4L254.8 719.5L258.6 717.9L262.3 718.6L266.6 719.5L270.9 722.0L274.6 723.8L276.5 726.3L274.0 730.6L270.3 733.7L266.0 735.0L261.0 733.7L256.1 732.5L251.1 731.3L246.2 732.5L243.1 729.4L241.2 726.3Z" fill="#dcdcdc" stroke-width="0.6"/>
<path d="M241.5 736.2L243.1 731.3L246.2 733.1L251.1 731.9L256.1 733.1L261.0 734.4L266.0 735.6L269.1 736.2L267.2 738.7L269.1 741.8L267.2 742.4L264.1 746.1L258.6 751.1L253.6 752.3L248.7 751.1L244.9 748.6L241.9 743.6Z" fill="#dcdcdc" stroke-width="0.6"/>
<path d="M277.1 724.5L282.1 723.2L285.8 722.0L291.9 723.2L298.1 723.2L301.8 725.7L304.9 725.7L302.5 728.8L298.1 731.3L294.4 733.7L289.5 733.7L284.5 732.5L279.6 728.8Z" fill="#aecbfa" stroke-width="0.6"/>
<path d="M303.7 718.3L305.6 717.7L309.3 719.9L314.2 723.5L317.3 725.7L316.7 729.4L314.2 731.9L310.5 735.0L307.4 736.2L309.3 738.1L306.8 739.3L309.3 742.4L311.7 746.1L312.4 749.8L310.5 753.5L306.8 756.0L301.8 756.6L298.1 755.4L294.4 753.5L292.6 750.4L289.5 748.6L285.8 750.4L282.1 749.2L277.1 747.3L273.4 744.9L270.3 741.2L267.8 737.4L270.9 735.0L274.6 731.3L276.5 726.9L279.6 729.4L284.5 733.1L289.5 734.4L294.4 734.4L298.1 731.9L302.5 729.4L304.9 726.3L303.7 723.8L303.1 720.1Z" fill="#1967d2" stroke-width="0.6"/>
<path d="M270.3 741.8L273.1 745.1L277.1 748.0L282.1 749.8L285.8 751.1L288.9 749.2L289.5 751.7L286.4 753.5L283.3 753.5L280.8 757.2L277.1 762.2L274.6 769.6L273.4 767.1L270.9 760.9L267.8 757.2L265.4 754.8L266.6 750.4L269.1 747.3Z" fill="#1967d2" stroke-width="0.6"/>
<path d="M259.2 751.1L264.7 746.1L267.8 742.4L269.7 743.0L268.7 747.3L266.0 750.4L262.9 753.5L259.8 752.9Z" fill="#4285f4" stroke-width="0.35"/>
<path d="M288.9 752.3L290.7 751.1L292.6 754.1L291.9 758.5L293.2 762.2L291.9 762.8L290.1 758.5L288.2 756.0Z" fill="#8ab4f8" stroke-width="0.35"/>
<path d="M293.2 758.5L295.7 757.2L297.5 759.7L296.3 762.2L297.5 764.7L295.7 764.0L294.4 761.6Z" fill="#4285f4" stroke-width="0.35"/>
<path d="M298.1 756.0L300.6 757.2L301.8 760.9L303.1 764.7L301.2 767.1L299.4 765.9L301.2 762.8L299.4 759.7Z" fill="#1967d2" stroke-width="0.35"/>
<path d="M295.9 756.2L298.1 756.6L299.6 760.9L297.9 760.3Z" fill="#8ab4f8" stroke-width="0.15"/>
<path d="M314.2 735.0L316.7 736.2L317.3 740.5L315.4 739.9Z" fill="#1967d2" stroke-width="0.35"/>
<path d="M325.3 728.8L328.4 728.8L328.1 730.6L326.0 730.6Z" fill="#1967d2" stroke-width="0.15"/>
<path d="M327.2 734.4L328.3 735.0L328.1 739.3L325.6 741.4L322.6 742.6L320.4 743.9L320.1 743.0L323.5 741.2L326.6 738.7Z" fill="#1967d2" stroke-width="0.35"/>
<path d="M314.8 760.9L316.7 760.9L317.3 768.4L315.7 767.1Z" fill="#4285f4" stroke-width="0.35"/>
<path d="M307.4 815.2L307.9 810.7L307.4 806.2L309.6 802.9L314.1 801.2L317.5 798.4L320.3 795.0L324.2 794.4L327.6 792.2L330.4 792.7L331.0 795.5L333.8 798.4L336.0 795.0L336.6 791.6L337.7 793.9L338.8 798.4L341.1 802.9L342.8 807.4L342.2 811.9L340.0 816.4L337.2 820.3L333.2 822.0L329.8 821.4L328.2 817.5L326.5 814.7L324.2 815.2L320.9 813.0L316.4 813.5L311.9 814.7Z" fill="#1967d2" stroke-width="0.6"/>
<path d="M330.7 826.5L332.7 825.9L331.9 828.2Z" fill="#1967d2" stroke-width="0.15"/>
<path d="M358.5 824.8L360.8 823.3L361.6 824.2L359.6 826.5Z" fill="#1967d2" stroke-width="0.15"/>
<path d="M348.4 833.8L355.7 827.9L356.5 828.7L349.5 834.6Z" fill="#1967d2" stroke-width="0.35"/>
<path d="M297.0 778.1L298.4 777.3L302.0 783.0L300.6 784.0Z" fill="#1967d2" stroke-width="0.35"/>
<path d="M306.2 778.7L308.5 777.0L311.3 774.2L313.0 775.3L312.4 779.2L310.2 782.1L307.4 781.5Z" fill="#1967d2" stroke-width="0.35"/>
<path d="M331.5 782.6L334.3 782.1L334.9 787.1L333.2 784.9Z" fill="#1967d2" stroke-width="0.15"/>
<path d="M335.5 783.7L338.8 783.2L341.1 786.0L343.3 788.8L340.0 787.7L337.2 786.5Z" fill="#dcdcdc" stroke-width="0.35"/>
<path d="M294.4 759.6L297.8 761.2L299.5 764.1L297.8 764.6L295.5 762.4Z" fill="#4285f4" stroke-width="0.35"/>
<path d="M299.5 765.2L301.7 765.7L300.6 768.0Z" fill="#4285f4" stroke-width="0.15"/>
<path d="M277.0 770.8L277.9 770.5L277.7 772.3Z" fill="#1967d2" stroke-width="0.15"/>
<path d="M125.4 771.6L128.3 768.6L130.1 771.6L133.1 774.5L132.5 777.5L131.3 780.4L128.3 779.8L126.6 777.5L124.2 776.9Z" fill="#1967d2" stroke-width="0.6"/>
<path d="M130.1 769.8L134.3 768.6L139.0 769.8L140.7 772.8L137.8 773.9L135.4 776.9L133.7 774.5L130.9 771.9Z" fill="#aecbfa" stroke-width="0.35"/>
<path d="M141.6 773.6L148.4 774.8L148.9 777.4L144.9 777.5L141.6 776.4Z" fill="#dcdcdc" stroke-width="0.35"/>
<path d="M121.8 779.8L124.8 778.7L125.4 781.0L123.0 782.2Z" fill="#1967d2" stroke-width="0.15"/>
<path d="M122.4 782.8L126.0 781.0L128.9 782.8L128.3 786.3L131.3 789.9L133.1 792.2L132.5 795.8L129.5 794.6L126.6 791.1L124.2 786.9Z" fill="#4285f4" stroke-width="0.6"/>
<path d="M133.1 778.7L135.4 777.5L138.4 774.5L141.3 776.9L145.5 778.1L149.6 778.1L152.0 780.4L157.9 782.2L163.8 784.6L165.0 786.9L162.6 792.2L161.4 798.1L156.7 801.7L153.7 805.2L152.0 809.4L150.2 811.1L147.8 808.8L148.4 804.6L145.5 801.1L144.3 797.0L140.7 793.4L136.6 790.5L134.3 788.1L129.5 786.9L129.5 784.6L132.5 782.2Z" fill="#1967d2" stroke-width="0.6"/>
<path d="M133.7 790.5L136.6 791.1L140.7 794.0L143.7 797.6L141.3 799.9L137.8 800.5L135.4 799.3L134.3 795.8Z" fill="#dcdcdc" stroke-width="0.6"/>
<path d="M141.3 799.9L143.9 798.1L145.5 801.7L147.8 804.6L146.7 806.4L144.3 804.1L141.9 802.9Z" fill="#1967d2" stroke-width="0.35"/>
<path d="M146.7 811.1L149.0 810.5L150.2 812.9L147.8 814.7L146.3 813.5Z" fill="#aecbfa" stroke-width="0.35"/>
<path d="M136.0 802.9L137.8 801.7L141.3 800.5L141.9 803.5L144.3 804.6L146.7 807.0L145.5 810.5L146.1 814.1L147.2 817.0L145.5 818.8L142.5 820.6L140.7 825.3L140.2 830.0L139.0 834.8L138.0 836.5L136.6 833.6L136.0 827.7L135.4 820.6L135.4 813.5L135.2 807.6Z" fill="#1967d2" stroke-width="0.6"/>
<path d="M133.7 795.8L134.8 797.0L135.1 807.6L135.2 820.6L136.0 830.0L136.8 835.4L139.6 838.3L140.7 839.5L138.4 838.9L135.4 835.9L134.3 827.7L133.7 815.9L133.4 804.1Z" fill="#4285f4" stroke-width="0.6"/>
<path d="M139.6 838.9L143.7 839.2L141.3 840.1Z" fill="#1967d2" stroke-width="0.15"/>
</g>
<path d="M208.7 755.8L213.2 757.5L213.8 767.6" fill="none" stroke="#fff" stroke-width="0.7" stroke-linejoin="round"/>
<path d="M203.7 759.2L203.1 767.1" fill="none" stroke="#fff" stroke-width="0.7" stroke-linejoin="round"/>
<path d="M213.8 757.5L223.4 756.9L224.2 748.3" fill="none" stroke="#fff" stroke-width="0.7" stroke-linejoin="round"/>
<path d="M223.4 756.9L222.8 768.7L233.5 768.7" fill="none" stroke="#fff" stroke-width="0.7" stroke-linejoin="round"/>
<path d="M213.8 767.6L222.8 768.7" fill="none" stroke="#fff" stroke-width="0.7" stroke-linejoin="round"/>
<path d="M211.0 771.0L214.4 773.2L222.2 772.1L222.8 768.7" fill="none" stroke="#fff" stroke-width="0.7" stroke-linejoin="round"/>
<path d="M214.4 773.2L213.8 780.0L220.0 782.2L229.0 780.0L233.5 775.5L235.7 774.4" fill="none" stroke="#fff" stroke-width="0.7" stroke-linejoin="round"/>
<path d="M220.0 782.2L220.6 789.0L227.9 791.2L229.0 780.0" fill="none" stroke="#fff" stroke-width="0.7" stroke-linejoin="round"/>
<path d="M211.6 794.6L220.6 795.7L220.6 789.0" fill="none" stroke="#fff" stroke-width="0.7" stroke-linejoin="round"/>
<path d="M220.6 795.7L220.0 802.5L219.4 807.0" fill="none" stroke="#fff" stroke-width="0.7" stroke-linejoin="round"/>
<path d="M220.0 802.5L227.9 798.0L236.3 794.6" fill="none" stroke="#fff" stroke-width="0.7" stroke-linejoin="round"/>
<path d="M227.9 791.2L237.4 786.7" fill="none" stroke="#fff" stroke-width="0.7" stroke-linejoin="round"/>
<path d="M184.6 758.6L195.2 763.1L196.4 753.6" fill="none" stroke="#fff" stroke-width="0.7" stroke-linejoin="round"/>
<path d="M187.9 771.0L188.5 764.2L195.2 763.1" fill="none" stroke="#fff" stroke-width="0.7" stroke-linejoin="round"/>
<path d="M197.5 773.2L196.9 766.5L203.7 767.1" fill="none" stroke="#fff" stroke-width="0.7" stroke-linejoin="round"/>
<path d="M188.5 764.2L196.9 766.5" fill="none" stroke="#fff" stroke-width="0.7" stroke-linejoin="round"/>
<path d="M211.0 746.2L208.7 755.8" fill="none" stroke="#fff" stroke-width="0.7" stroke-linejoin="round"/>
<path d="M238.0 782.2L229.0 780.0" fill="none" stroke="#fff" stroke-width="0.7" stroke-linejoin="round"/>
<path d="M247.0 741.7L249.2 747.4" fill="none" stroke="#fff" stroke-width="0.7" stroke-linejoin="round"/>
<path d="M253.7 741.7L252.6 748.5" fill="none" stroke="#fff" stroke-width="0.7" stroke-linejoin="round"/>
<path d="M251.1 731.9L253.6 736.2L258.6 737.4L266.0 735.6" fill="none" stroke="#fff" stroke-width="0.7" stroke-linejoin="round"/>
<path d="M253.6 736.2L252.4 742.4L258.6 743.6L264.1 746.1" fill="none" stroke="#fff" stroke-width="0.7" stroke-linejoin="round"/>
<path d="M252.4 742.4L247.4 741.2L244.9 748.6" fill="none" stroke="#fff" stroke-width="0.7" stroke-linejoin="round"/>
<path d="M258.6 737.4L258.6 743.6" fill="none" stroke="#fff" stroke-width="0.7" stroke-linejoin="round"/>
<path d="M243.1 731.3L247.4 741.2" fill="none" stroke="#fff" stroke-width="0.7" stroke-linejoin="round"/>
</svg>
<div class="abs" style="left:0;top:886px;width:1528px;height:1px;background:rgba(31,30,28,.35)"></div><div class="abs" style="left:0;top:887px;width:1528px;height:2px;background:#1f1e1c"></div>
</body></html>
